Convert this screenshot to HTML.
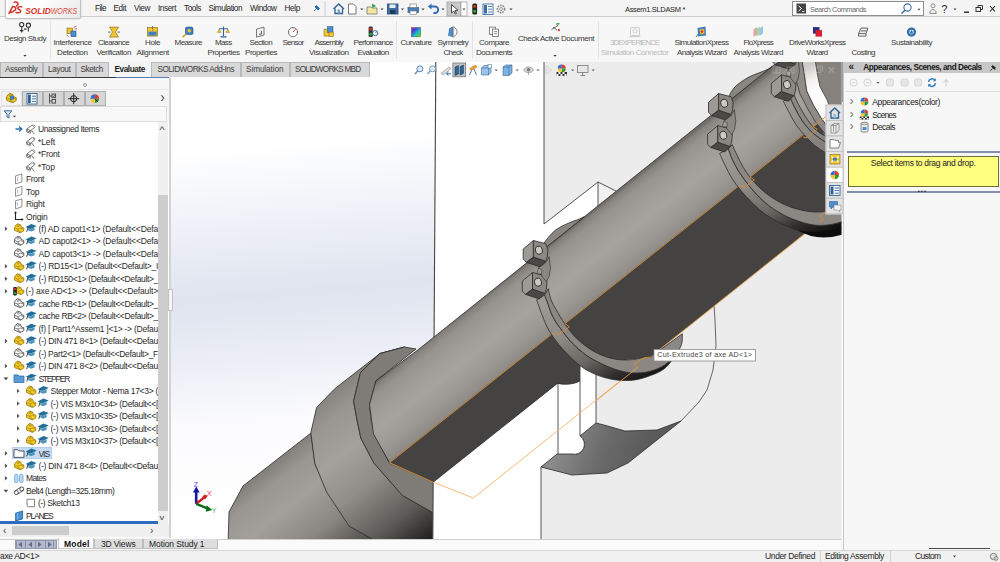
<!DOCTYPE html>
<html lang="en"><head><meta charset="utf-8"><title>SOLIDWORKS - Assem1.SLDASM</title>
<style>
html,body{margin:0;padding:0}
body{width:1000px;height:562px;overflow:hidden;position:relative;background:#f2f2f2;font-family:"Liberation Sans",sans-serif}
.t{position:absolute;white-space:pre}
.a{position:absolute}
svg{position:absolute;left:0;top:0}
</style></head><body>
<svg width="1000" height="562" viewBox="0 0 1000 562">
<defs>
<clipPath id="vp"><rect x="170.7" y="62" width="670.8" height="477"/></clipPath>
<linearGradient id="bg" gradientUnits="userSpaceOnUse" x1="290" y1="62" x2="330" y2="539"><stop offset="0" stop-color="#fff"/><stop offset="0.17" stop-color="#fff"/><stop offset="0.36" stop-color="#ebeef6"/><stop offset="0.48" stop-color="#e0e4ef"/><stop offset="0.6" stop-color="#eaedf5"/><stop offset="0.75" stop-color="#fcfcfe"/><stop offset="1" stop-color="#fff"/></linearGradient>
<linearGradient id="sh" gradientUnits="userSpaceOnUse" x1="500.0" y1="284.2" x2="543.9" y2="340.0"><stop offset="0" stop-color="#6f6c67"/><stop offset="0.04" stop-color="#85827d"/><stop offset="0.14" stop-color="#96938e"/><stop offset="0.35" stop-color="#a19e99"/><stop offset="0.55" stop-color="#a6a39e"/><stop offset="0.8" stop-color="#9c9994"/><stop offset="1" stop-color="#8e8b86"/></linearGradient>
<linearGradient id="fl" gradientUnits="userSpaceOnUse" x1="350.0" y1="377.0" x2="467.4" y2="526.3"><stop offset="0" stop-color="#86837e"/><stop offset="0.12" stop-color="#9a9792"/><stop offset="0.3" stop-color="#a4a19c"/><stop offset="0.5" stop-color="#918e89"/><stop offset="0.75" stop-color="#5c5a57"/><stop offset="0.95" stop-color="#1a1a19"/><stop offset="1" stop-color="#0c0c0c"/></linearGradient>
<linearGradient id="sc" gradientUnits="userSpaceOnUse" x1="280.0" y1="457.0" x2="372.7" y2="574.9"><stop offset="0" stop-color="#827f7a"/><stop offset="0.12" stop-color="#9a9792"/><stop offset="0.3" stop-color="#a3a09b"/><stop offset="0.55" stop-color="#8a8782"/><stop offset="0.8" stop-color="#504e4b"/><stop offset="1" stop-color="#1c1c1b"/></linearGradient>
<linearGradient id="rg" gradientUnits="objectBoundingBox" x1="0" y1="0" x2="0.9" y2="1"><stop offset="0" stop-color="#a29f9a"/><stop offset="0.35" stop-color="#8f8c87"/><stop offset="0.6" stop-color="#6a6864"/><stop offset="0.8" stop-color="#2e2d2b"/><stop offset="1" stop-color="#0a0a0a"/></linearGradient>
<linearGradient id="rgC" gradientUnits="objectBoundingBox" x1="0" y1="0" x2="0.9" y2="1"><stop offset="0" stop-color="#a09d98"/><stop offset="1" stop-color="#7d7a75"/></linearGradient>
<linearGradient id="pk" gradientUnits="userSpaceOnUse" x1="560" y1="440" x2="640" y2="470"><stop offset="0" stop-color="#8b8b8b"/><stop offset="0.5" stop-color="#6b6b6b"/><stop offset="1" stop-color="#5a5a5a"/></linearGradient>
<linearGradient id="wb" gradientUnits="userSpaceOnUse" x1="803" y1="70" x2="822" y2="100"><stop offset="0" stop-color="#cfcdc9"/><stop offset="0.35" stop-color="#f1f0ee"/><stop offset="0.7" stop-color="#ffffff"/><stop offset="1" stop-color="#fbfbfa"/></linearGradient>
</defs>
<g clip-path="url(#vp)">
<rect x="170" y="62" width="673" height="477" fill="url(#bg)"/>
<polygon points="311.0,433.0 243.0,486.0 229.0,512.0 228.0,545.0 380.0,545.0 330.0,495.0 315.0,464.0" fill="url(#sc)" stroke="#2b2b2b" stroke-width="0.8" stroke-linejoin="round"/>
<polygon points="404.5,347.0 380.0,353.5 334.8,388.7 316.6,407.4 310.8,432.8 314.8,463.5 326.6,492.0 349.0,526.0 372.0,539.0 380.0,545.0 450.0,545.0 450.0,520.0 432.3,512.3 402.4,495.4 373.8,463.0 360.8,438.0 357.0,420.0 353.6,401.0 360.5,372.5 380.0,353.5 404.5,347.0" fill="url(#fl)" stroke="#2b2b2b" stroke-width="0.8" stroke-linejoin="round"/>
<polygon points="416.0,349.0 404.5,347.0 380.0,353.5 360.5,372.5 353.6,401.0 357.0,420.0 360.8,438.0 373.8,463.0 402.4,495.4 432.3,512.3 450.0,520.0 450.0,489.0 389.4,463.0 375.0,435.6 371.2,420.0 369.5,404.7 376.0,380.7" fill="#7f7c77" stroke="#2b2b2b" stroke-width="0.8" stroke-linejoin="round"/>
<polygon points="435.8,62 843,62 843,539 432.8,539" fill="#fff"/>
<polygon points="544.0,62.0 843.0,62.0 843.0,539.0 541.0,539.0 541.0,467.0 557.0,454.0 572.0,454.0 580.0,436.0 596.0,423.0 596.0,300.0 616.0,191.0 598.0,182.0 544.0,224.0" fill="#ececec"/>
<polygon points="598,182 616.2,190.6 640,200 640,260 598,260" fill="#f1f1f1"/>
<path d="M435.8,62.0L432.8,539.0" fill="none" stroke="#444" stroke-width="1.1" stroke-linejoin="round" />
<path d="M544.0,62.0L544.0,224.0L598.0,182.0L616.0,191.0" fill="none" stroke="#2b2b2b" stroke-width="0.8" stroke-linejoin="round" />
<path d="M598.0,182.0L598.0,206.0" fill="none" stroke="#2b2b2b" stroke-width="0.8" stroke-linejoin="round" />
<path d="M558.0,383.0L558.0,454.0" fill="none" stroke="#2b2b2b" stroke-width="0.8" stroke-linejoin="round" />
<path d="M580.0,365.0L580.0,436.0" fill="none" stroke="#2b2b2b" stroke-width="0.8" stroke-linejoin="round" />
<path d="M596.0,372.0L596.0,423.0" fill="none" stroke="#2b2b2b" stroke-width="0.8" stroke-linejoin="round" />
<path d="M541.0,467.0L541.0,539.0" fill="none" stroke="#2b2b2b" stroke-width="0.8" stroke-linejoin="round" />
<path d="M681.0,421.0L699.0,402.0L707.0,390.0L713.0,370.0L716.0,346.0L715.0,320.0L714.0,305.0" fill="none" stroke="#2b2b2b" stroke-width="0.7" stroke-linejoin="round" />
<path d="M541,467 L557,454 L572,454 A10,10 0 0 0 580,436 L596,423 L604,425 L625,431 L657,430 L681,421 L628,463 L607,473 L572,475 Z" fill="url(#pk)" stroke="#2b2b2b" stroke-width="0.8" stroke-linejoin="round"/>
<path d="M572,454 A10,10 0 0 0 580,436 L578,440 Z" fill="#fff" stroke="none"/><path d="M572,454 A10,10 0 0 0 580,436" fill="#fff" stroke="#2b2b2b" stroke-width="0.8"/>
<polygon points="416.0,351.4 376.0,380.7 369.5,404.7 373.5,434.0 389.5,462.7 860.0,89.8 860.0,40.0 805.2,40.0 416.0,351.4" fill="url(#sh)" stroke="#2b2b2b" stroke-width="0.8" stroke-linejoin="round"/>
<path d="M389.5,462.7 L860,89.8 L860,189.6 L649.5,357.5 L580,365 L580,381 Q570,386 557.4,383.4 L433.2,482.2 Z" fill="#454341"/>
<path d="M580,381 Q570,386 557.4,383.4 L433.2,482.2" fill="none" stroke="#2b2b2b" stroke-width="0.8" stroke-linejoin="round" />
<path d="M433.2,482.2 L389.5,462.7" fill="none" stroke="#d98a32" stroke-width="0.95" stroke-linejoin="round" />
<path d="M433.2,482.2 L473.4,498 L649.5,357.5" fill="none" stroke="#f6b26b" stroke-width="0.9" stroke-linejoin="round" />
<path d="M389.5,462.7 L860,89.8" fill="none" stroke="#d98a32" stroke-width="0.95" stroke-linejoin="round" />
<path d="M655,353.1 L860,189.6" fill="none" stroke="#d98a32" stroke-width="0.95" stroke-linejoin="round" />
<polygon points="794.0,56.0 850.0,56.0 850.0,240.0 826.0,140.0 808.0,92.0" fill="#86837e"/>
<path d="M794.3,56.0L794.3,62.4L796.2,80.4L800.0,94.1L808.6,110.3L816.1,122.8L826.0,135.0L830.0,130.0L821.1,117.8L813.6,105.3L806.8,91.0L804.3,74.2L802.4,62.4L802.4,56.0Z" fill="#8f8c87" stroke="#2b2b2b" stroke-width="0.7"/>
<path d="M802.4,56.0L802.4,62.4L804.3,74.2L806.8,91.0L813.6,105.3L821.1,117.8L830.0,130.0L836.0,118.0L828.6,104.0L826.7,99.1L819.9,86.6L817.4,74.2L815.5,62.4L815.5,56.0Z" fill="url(#wb)" stroke="#2b2b2b" stroke-width="0.7"/>
<path d="M793.0,45.4C794.0,43.8 796.7,38.5 798.9,36.0C801.1,33.5 804.8,31.3 806.0,30.4L806.0,39.4L793.0,49.8Z" fill="#8a8782" stroke="none"/>
<path d="M793.0,45.4C794.0,43.8 796.7,38.5 798.9,36.0C801.1,33.5 804.8,31.3 806.0,30.4" fill="none" stroke="#2b2b2b" stroke-width="0.8" stroke-linejoin="round" />
<path d="M793.0,49.8L806.0,39.4" fill="none" stroke="#2b2b2b" stroke-width="0.8" stroke-linejoin="round" />
<path d="M783.4,101.3C784.4,103.3 787.4,109.3 789.6,113.4C791.8,117.5 794.1,122.0 796.8,125.8C799.5,129.7 802.7,133.2 805.7,136.5C808.7,139.8 811.4,142.7 814.6,145.4C817.9,148.1 821.6,150.4 825.2,152.5C828.8,154.6 834.2,157.1 836.0,158.0L836.0,148.0C834.3,147.0 828.7,143.8 826.0,142.2C823.3,140.6 822.4,140.1 819.9,138.3C817.4,136.5 814.0,134.2 811.0,131.2C808.0,128.2 804.8,124.4 802.1,120.5C799.4,116.6 797.1,112.0 795.0,108.0C792.9,104.0 790.5,98.4 789.6,96.5Z" fill="url(#rgC)" stroke="#2b2b2b" stroke-width="0.8" stroke-linejoin="round"/>
<path d="M789.6,96.5C790.5,98.4 792.9,104.0 795.0,108.0C797.1,112.0 799.4,116.6 802.1,120.5C804.8,124.4 808.0,128.2 811.0,131.2C814.0,134.2 817.4,136.5 819.9,138.3C822.4,140.1 823.3,140.6 826.0,142.2C828.7,143.8 834.3,147.0 836.0,148.0L836.0,142.0C834.3,141.1 828.7,138.0 826.0,136.5C823.3,135.0 822.1,134.6 819.9,133.0C817.7,131.4 815.2,129.4 812.8,126.7C810.4,124.0 808.1,120.7 805.7,117.0C803.3,113.3 800.6,108.5 798.5,104.5C796.4,100.5 794.1,94.8 793.2,92.9Z" fill="#8b8883" stroke="#2b2b2b" stroke-width="0.8" stroke-linejoin="round"/>
<path d="M803.0,137.0L807.3,137.8L817.2,129.2L812.8,126.7L830.0,113.5" fill="none" stroke="#d98a32" stroke-width="0.95" stroke-linejoin="round" />
<polygon points="782.4,42.9 772.2,51.5 772.2,61.6 775.4,64.8 782.4,59.5" fill="#9d9a95" stroke="#2b2b2b" stroke-width="0.8" stroke-linejoin="round"/>
<polygon points="775.4,64.8 782.4,59.5 794.7,63.7 789.3,69.3" fill="#4b4946" stroke="#2b2b2b" stroke-width="0.8" stroke-linejoin="round"/>
<polygon points="782.4,42.9 794.7,46.1 796.9,52.0 796.2,59.5 794.7,63.7 782.4,59.5" fill="#8b8883" stroke="#2b2b2b" stroke-width="0.8" stroke-linejoin="round"/>
<ellipse cx="787.9" cy="52.6" rx="3.4" ry="4" fill="#cbc9c5" stroke="#2b2b2b" stroke-width="0.9" transform="rotate(-15 787.9 52.6)"/>
<polygon points="781.5,74.9 771.3,83.5 771.3,93.6 774.5,96.8 781.5,91.5" fill="#9d9a95" stroke="#2b2b2b" stroke-width="0.8" stroke-linejoin="round"/>
<polygon points="774.5,96.8 781.5,91.5 793.8,95.7 788.4,101.3" fill="#4b4946" stroke="#2b2b2b" stroke-width="0.8" stroke-linejoin="round"/>
<polygon points="781.5,74.9 793.8,78.1 796.0,84.0 795.3,91.5 793.8,95.7 781.5,91.5" fill="#8b8883" stroke="#2b2b2b" stroke-width="0.8" stroke-linejoin="round"/>
<ellipse cx="787.0" cy="84.6" rx="3.4" ry="4" fill="#cbc9c5" stroke="#2b2b2b" stroke-width="0.9" transform="rotate(-15 787.0 84.6)"/>
<path d="M729.0,96.0C730.0,94.5 732.0,89.8 735.2,86.7C738.4,83.6 743.9,79.9 748.0,77.6C752.1,75.2 756.4,74.0 759.8,72.6C763.2,71.2 766.3,70.0 768.3,69.0C770.3,68.0 771.4,66.9 772.0,66.5L772.0,66.6L729.0,101.0Z" fill="#8a8782" stroke="none"/>
<path d="M729.0,96.0C730.0,94.5 732.0,89.8 735.2,86.7C738.4,83.6 743.9,79.9 748.0,77.6C752.1,75.2 756.4,74.0 759.8,72.6C763.2,71.2 766.3,70.0 768.3,69.0C770.3,68.0 771.4,66.9 772.0,66.5" fill="none" stroke="#2b2b2b" stroke-width="0.8" stroke-linejoin="round" />
<path d="M729.0,101.0L772.0,66.6" fill="none" stroke="#2b2b2b" stroke-width="0.8" stroke-linejoin="round" />
<path d="M719.6,153.5C720.6,155.6 723.4,161.9 725.5,166.2C727.6,170.4 729.7,174.9 732.3,179.0C734.9,183.1 737.7,186.6 741.1,190.7C744.5,194.8 748.6,199.3 752.9,203.4C757.1,207.5 761.7,211.8 766.6,215.2C771.5,218.6 777.0,221.5 782.2,224.0C787.4,226.5 792.7,228.7 797.9,230.3C803.1,231.9 808.7,233.0 813.6,233.4C818.5,233.8 822.7,233.7 827.3,232.8C831.9,231.9 837.2,229.7 841.0,227.9C844.8,226.1 848.5,223.0 850.0,222.0L850.0,218.0C848.5,218.7 844.8,220.8 841.0,222.0C837.2,223.2 831.9,224.5 827.3,225.0C822.7,225.5 818.5,225.7 813.6,225.0C808.7,224.3 803.1,222.8 797.9,221.0C792.7,219.2 787.1,216.8 782.2,214.2C777.3,211.6 772.7,208.7 768.5,205.4C764.3,202.1 760.4,198.3 756.8,194.6C753.2,190.8 749.9,186.7 747.0,182.9C744.1,179.2 741.7,176.0 739.2,172.1C736.8,168.2 734.1,163.3 732.3,159.4C730.5,155.5 729.0,150.4 728.4,148.6Z" fill="url(#rg)" stroke="#2b2b2b" stroke-width="0.8" stroke-linejoin="round"/>
<path d="M728.4,148.6C729.0,150.4 730.5,155.5 732.3,159.4C734.1,163.3 736.8,168.2 739.2,172.1C741.7,176.0 744.1,179.2 747.0,182.9C749.9,186.7 753.2,190.8 756.8,194.6C760.4,198.3 764.3,202.1 768.5,205.4C772.7,208.7 777.3,211.6 782.2,214.2C787.1,216.8 792.7,219.2 797.9,221.0C803.1,222.8 808.7,224.3 813.6,225.0C818.5,225.7 822.7,225.5 827.3,225.0C831.9,224.5 837.2,223.2 841.0,222.0C844.8,220.8 848.5,218.7 850.0,218.0L850.0,205.0L825.3,211.8C823.0,211.8 816.2,212.2 811.6,211.8C807.0,211.4 802.5,210.5 797.9,209.3C793.3,208.1 788.8,206.5 784.2,204.4C779.6,202.3 774.8,199.5 770.5,196.6C766.2,193.7 762.1,190.1 758.7,186.8C755.3,183.5 752.5,180.3 749.9,177.0C747.3,173.7 745.2,170.8 743.1,167.2C741.0,163.6 739.0,159.2 737.2,155.5C735.4,151.8 733.1,146.5 732.3,144.7Z" fill="#8b8883" stroke="#2b2b2b" stroke-width="0.8" stroke-linejoin="round"/>
<path d="M739.2,185.8L745.0,187.4L754.4,179.9L749.9,177.0" fill="none" stroke="#d98a32" stroke-width="0.95" stroke-linejoin="round" />
<path d="M819.4,222.0L823.8,219.7L819.4,216.2L825.3,211.8" fill="none" stroke="#d98a32" stroke-width="0.95" stroke-linejoin="round" />
<path d="M797.9,230.3 Q815,234 841,227.9 L850,222 L850,232 Q820,244 797.9,230.3Z" fill="#0c0c0c"/>
<polygon points="718.7,93.6 708.5,102.2 708.5,112.3 711.7,115.5 718.7,110.2" fill="#9d9a95" stroke="#2b2b2b" stroke-width="0.8" stroke-linejoin="round"/>
<polygon points="711.7,115.5 718.7,110.2 731.0,114.4 725.6,120.0" fill="#4b4946" stroke="#2b2b2b" stroke-width="0.8" stroke-linejoin="round"/>
<polygon points="718.7,93.6 731.0,96.8 733.2,102.7 732.5,110.2 731.0,114.4 718.7,110.2" fill="#8b8883" stroke="#2b2b2b" stroke-width="0.8" stroke-linejoin="round"/>
<ellipse cx="724.2" cy="103.3" rx="3.4" ry="4" fill="#cbc9c5" stroke="#2b2b2b" stroke-width="0.9" transform="rotate(-15 724.2 103.3)"/>
<polygon points="717.8,125.6 707.6,134.2 707.6,144.3 710.8,147.5 717.8,142.2" fill="#9d9a95" stroke="#2b2b2b" stroke-width="0.8" stroke-linejoin="round"/>
<polygon points="710.8,147.5 717.8,142.2 730.1,146.4 724.7,152.0" fill="#4b4946" stroke="#2b2b2b" stroke-width="0.8" stroke-linejoin="round"/>
<polygon points="717.8,125.6 730.1,128.8 732.3,134.7 731.6,142.2 730.1,146.4 717.8,142.2" fill="#8b8883" stroke="#2b2b2b" stroke-width="0.8" stroke-linejoin="round"/>
<ellipse cx="723.3" cy="135.3" rx="3.4" ry="4" fill="#cbc9c5" stroke="#2b2b2b" stroke-width="0.9" transform="rotate(-15 723.3 135.3)"/>
<path d="M544.0,243.0C544.7,242.1 546.2,239.8 548.3,237.5C550.3,235.2 552.8,232.0 556.3,229.5C559.8,227.0 565.6,224.4 569.5,222.7C573.4,220.9 577.0,220.0 579.4,219.0C581.8,218.0 583.2,217.2 584.0,216.8L584.0,217.0L544.0,249.0Z" fill="#8a8782" stroke="none"/>
<path d="M544.0,243.0C544.7,242.1 546.2,239.8 548.3,237.5C550.3,235.2 552.8,232.0 556.3,229.5C559.8,227.0 565.6,224.4 569.5,222.7C573.4,220.9 577.0,220.0 579.4,219.0C581.8,218.0 583.2,217.2 584.0,216.8" fill="none" stroke="#2b2b2b" stroke-width="0.8" stroke-linejoin="round" />
<path d="M544.0,249.0L584.0,217.0" fill="none" stroke="#2b2b2b" stroke-width="0.8" stroke-linejoin="round" />
<path d="M536.7,299.8C537.3,301.5 538.5,305.5 540.2,310.0C541.9,314.5 544.4,321.5 547.0,326.7C549.6,331.9 552.4,336.2 556.0,341.0C559.6,345.8 564.0,350.8 568.5,355.2C573.0,359.6 577.7,364.2 582.7,367.6C587.7,371.0 593.1,373.5 598.7,375.6C604.3,377.7 610.6,379.3 616.5,380.0C622.4,380.7 628.7,380.7 634.3,380.0C639.9,379.3 645.2,377.5 650.3,375.6C655.3,373.7 660.3,371.9 664.6,368.5C668.9,365.1 674.1,357.2 676.0,355.0L675.2,355.2C673.4,356.8 668.8,362.3 664.6,365.0C660.5,367.7 655.3,369.9 650.3,371.2C645.2,372.5 639.6,373.1 634.3,373.0C629.0,372.9 623.6,371.8 618.3,370.3C613.0,368.8 607.6,366.5 602.3,364.0C597.0,361.5 591.3,358.8 586.3,355.2C581.2,351.6 576.3,347.1 572.0,342.7C567.7,338.2 563.8,332.9 560.5,328.5C557.2,324.1 554.5,320.0 552.5,316.0C550.5,312.0 549.6,308.2 548.3,304.7C547.0,301.2 545.3,296.6 544.7,295.0Z" fill="url(#rg)" stroke="#2b2b2b" stroke-width="0.8" stroke-linejoin="round"/>
<path d="M544.7,295.0C545.3,296.6 547.0,301.2 548.3,304.7C549.6,308.2 550.5,312.0 552.5,316.0C554.5,320.0 557.2,324.1 560.5,328.5C563.8,332.9 567.7,338.2 572.0,342.7C576.3,347.1 581.2,351.6 586.3,355.2C591.3,358.8 597.0,361.5 602.3,364.0C607.6,366.5 613.0,368.8 618.3,370.3C623.6,371.8 629.0,372.9 634.3,373.0C639.6,373.1 645.2,372.5 650.3,371.2C655.3,369.9 660.5,367.7 664.6,365.0C668.8,362.3 672.4,358.6 675.2,355.2C678.0,351.8 680.3,348.1 681.5,344.5C682.7,340.9 682.2,335.6 682.3,333.8L650.3,356.9L643.2,357.3C641.4,357.7 636.6,359.2 632.5,359.6C628.4,360.0 623.0,360.2 618.3,359.6C613.5,359.0 608.8,357.8 604.0,356.0C599.2,354.2 594.5,352.0 589.8,348.9C585.1,345.8 579.8,341.5 575.6,337.4C571.5,333.2 568.1,328.6 564.9,324.0C561.7,319.4 558.6,314.1 556.3,310.0C554.0,305.9 552.2,302.9 550.9,299.4C549.6,295.8 548.7,290.5 548.3,288.7Z" fill="#8b8883" stroke="#2b2b2b" stroke-width="0.8" stroke-linejoin="round"/>
<path d="M553.3,332.9L559.6,334.2L569.4,326.7L564.9,323.7" fill="none" stroke="#d98a32" stroke-width="0.95" stroke-linejoin="round" />
<path d="M650.3,357.0L644.0,357.8L634.3,364.0L637.9,367.3" fill="none" stroke="#d98a32" stroke-width="0.95" stroke-linejoin="round" />
<path d="M637.9,367.3L597.0,400.0" fill="none" stroke="#f0a050" stroke-width="0.9" stroke-linejoin="round" />
<polygon points="533.4,240.5 523.2,249.1 523.2,259.2 526.4,262.4 533.4,257.1" fill="#9d9a95" stroke="#2b2b2b" stroke-width="0.8" stroke-linejoin="round"/>
<polygon points="526.4,262.4 533.4,257.1 545.7,261.3 540.3,266.9" fill="#4b4946" stroke="#2b2b2b" stroke-width="0.8" stroke-linejoin="round"/>
<polygon points="533.4,240.5 545.7,243.7 547.9,249.6 547.2,257.1 545.7,261.3 533.4,257.1" fill="#8b8883" stroke="#2b2b2b" stroke-width="0.8" stroke-linejoin="round"/>
<ellipse cx="538.9" cy="250.2" rx="3.4" ry="4" fill="#cbc9c5" stroke="#2b2b2b" stroke-width="0.9" transform="rotate(-15 538.9 250.2)"/>
<polygon points="532.5,272.5 522.3,281.1 522.3,291.2 525.5,294.4 532.5,289.1" fill="#9d9a95" stroke="#2b2b2b" stroke-width="0.8" stroke-linejoin="round"/>
<polygon points="525.5,294.4 532.5,289.1 544.8,293.3 539.4,298.9" fill="#4b4946" stroke="#2b2b2b" stroke-width="0.8" stroke-linejoin="round"/>
<polygon points="532.5,272.5 544.8,275.7 547.0,281.6 546.3,289.1 544.8,293.3 532.5,289.1" fill="#8b8883" stroke="#2b2b2b" stroke-width="0.8" stroke-linejoin="round"/>
<ellipse cx="538.0" cy="282.2" rx="3.4" ry="4" fill="#cbc9c5" stroke="#2b2b2b" stroke-width="0.9" transform="rotate(-15 538.0 282.2)"/>
<polygon points="545.6,262.9 549.1,256.7 550.5,268.0 549.3,276.0 546.5,281.6 542.0,276.3 538.5,267.9" fill="#8b8883" stroke="#2b2b2b" stroke-width="0.6" stroke-linejoin="round"/>
<polygon points="538.5,267.9 542.0,270.0 541.5,274.0 537.0,273.5" fill="#a09d98" stroke="#2b2b2b" stroke-width="0.5"/>
<polygon points="730.9,116.0 734.4,109.8 735.8,121.1 734.6,129.1 731.8,134.7 727.3,129.4 723.8,121.0" fill="#8b8883" stroke="#2b2b2b" stroke-width="0.6" stroke-linejoin="round"/>
<polygon points="723.8,121.0 727.3,123.1 726.8,127.1 722.3,126.6" fill="#a09d98" stroke="#2b2b2b" stroke-width="0.5"/>
<polygon points="794.6,65.3 798.1,59.1 799.5,70.4 798.3,78.4 795.5,84.0 791.0,78.7 787.5,70.3" fill="#8b8883" stroke="#2b2b2b" stroke-width="0.6" stroke-linejoin="round"/>
<polygon points="787.5,70.3 791.0,72.4 790.5,76.4 786.0,75.9" fill="#a09d98" stroke="#2b2b2b" stroke-width="0.5"/>
</g>
<g fill="none">
<path d="M196.2,503.8 L196.2,492" stroke="#1414a8" stroke-width="2.6"/><path d="M192.9,492.6 L196.3,486.6 L199.7,492.6Z" fill="#1414a8"/>
<path d="M196.2,503.8 L204,497.6" stroke="#c81e1e" stroke-width="2.4"/><path d="M202,497.6 L204.4,494.4 L207.7,495.8 L205.4,499.2Z" fill="#d42222"/>
<path d="M196.2,503.8 L208,508.6" stroke="#0c6a1c" stroke-width="2.4"/><path d="M206.6,505.3 L212.2,510 L205.8,511.7Z" fill="#0c6a1c"/>
</g>
<text x="193.6" y="487" font-family="Liberation Sans, sans-serif" font-size="7.6" fill="#5a5aff">Z</text>
<text x="206.8" y="496" font-family="Liberation Sans, sans-serif" font-size="7.6" fill="#f0505e">X</text>
<text x="211.6" y="513" font-family="Liberation Sans, sans-serif" font-size="7.6" fill="#62b276">Y</text>
</svg>
<div class="a" style="left:0;top:0;width:1000px;height:16px;background:#f4f4f4"></div>
<div class="a" style="left:0;top:16px;width:1000px;height:46px;background:#f7f7f7;border-top:1px solid #cdcdcd;box-sizing:border-box"></div>
<div class="a" style="left:5px;top:-1px;width:76px;height:20px;background:linear-gradient(135deg,#fdfdfd 40%,#e9e9e9 100%);border:1px solid #c2c2c2;border-radius:0 0 2px 2px;box-sizing:border-box;box-shadow:0 0 1.5px #bbb"></div>
<span class="t" style="top:4.08px;font-size:8.2px;line-height:9.84px;color:#1e1e1e;letter-spacing:-0.551px;left:95.00px;">File</span>
<span class="t" style="top:4.08px;font-size:8.2px;line-height:9.84px;color:#1e1e1e;letter-spacing:-0.402px;left:113.50px;">Edit</span>
<span class="t" style="top:4.08px;font-size:8.2px;line-height:9.84px;color:#1e1e1e;letter-spacing:-0.402px;left:134.00px;">View</span>
<span class="t" style="top:4.08px;font-size:8.2px;line-height:9.84px;color:#1e1e1e;letter-spacing:-0.414px;left:158.00px;">Insert</span>
<span class="t" style="top:4.08px;font-size:8.2px;line-height:9.84px;color:#1e1e1e;letter-spacing:-0.425px;left:184.00px;">Tools</span>
<span class="t" style="top:4.08px;font-size:8.2px;line-height:9.84px;color:#1e1e1e;letter-spacing:-0.473px;left:208.50px;">Simulation</span>
<span class="t" style="top:4.08px;font-size:8.2px;line-height:9.84px;color:#1e1e1e;letter-spacing:-0.438px;left:250.00px;">Window</span>
<span class="t" style="top:4.08px;font-size:8.2px;line-height:9.84px;color:#1e1e1e;letter-spacing:-0.336px;left:284.50px;">Help</span>
<span class="t" style="top:4.50px;font-size:7.5px;line-height:9.00px;color:#1e1e1e;letter-spacing:-0.335px;left:625.00px;">Assem1.SLDASM *</span>
<div class="a" style="left:792px;top:1px;width:132px;height:15px;background:#fff;border:1px solid #8e8e8e;box-sizing:border-box"></div>
<span class="t" style="top:4.50px;font-size:7.5px;line-height:9.00px;color:#6a6a6a;letter-spacing:-0.547px;left:810.00px;">Search Commands</span>
<span class="t" style="top:37.60px;font-size:8px;line-height:9.60px;color:#383838;letter-spacing:-0.392px;left:53.50px;">Interference</span>
<span class="t" style="top:47.80px;font-size:8px;line-height:9.60px;color:#383838;letter-spacing:-0.366px;left:57.00px;">Detection</span>
<span class="t" style="top:37.60px;font-size:8px;line-height:9.60px;color:#383838;letter-spacing:-0.608px;left:98.00px;">Clearance</span>
<span class="t" style="top:47.80px;font-size:8px;line-height:9.60px;color:#383838;letter-spacing:-0.387px;left:96.50px;">Verification</span>
<span class="t" style="top:37.60px;font-size:8px;line-height:9.60px;color:#383838;letter-spacing:-0.363px;left:145.00px;">Hole</span>
<span class="t" style="top:47.80px;font-size:8px;line-height:9.60px;color:#383838;letter-spacing:-0.342px;left:136.50px;">Alignment</span>
<span class="t" style="top:37.60px;font-size:8px;line-height:9.60px;color:#383838;letter-spacing:-0.518px;left:174.50px;">Measure</span>
<span class="t" style="top:37.60px;font-size:8px;line-height:9.60px;color:#383838;letter-spacing:-0.656px;left:215.00px;">Mass</span>
<span class="t" style="top:47.80px;font-size:8px;line-height:9.60px;color:#383838;letter-spacing:-0.447px;left:207.50px;">Properties</span>
<span class="t" style="top:37.60px;font-size:8px;line-height:9.60px;color:#383838;letter-spacing:-0.598px;left:249.50px;">Section</span>
<span class="t" style="top:47.80px;font-size:8px;line-height:9.60px;color:#383838;letter-spacing:-0.447px;left:245.00px;">Properties</span>
<span class="t" style="top:37.60px;font-size:8px;line-height:9.60px;color:#383838;letter-spacing:-0.727px;left:282.50px;">Sensor</span>
<span class="t" style="top:37.60px;font-size:8px;line-height:9.60px;color:#383838;letter-spacing:-0.773px;left:314.50px;">Assembly</span>
<span class="t" style="top:47.80px;font-size:8px;line-height:9.60px;color:#383838;letter-spacing:-0.406px;left:309.00px;">Visualization</span>
<span class="t" style="top:37.60px;font-size:8px;line-height:9.60px;color:#383838;letter-spacing:-0.618px;left:353.50px;">Performance</span>
<span class="t" style="top:47.80px;font-size:8px;line-height:9.60px;color:#383838;letter-spacing:-0.636px;left:357.50px;">Evaluation</span>
<span class="t" style="top:37.60px;font-size:8px;line-height:9.60px;color:#383838;letter-spacing:-0.458px;left:400.50px;">Curvature</span>
<span class="t" style="top:37.60px;font-size:8px;line-height:9.60px;color:#383838;letter-spacing:-0.688px;left:437.50px;">Symmetry</span>
<span class="t" style="top:47.80px;font-size:8px;line-height:9.60px;color:#383838;letter-spacing:-0.738px;left:443.50px;">Check</span>
<span class="t" style="top:37.60px;font-size:8px;line-height:9.60px;color:#383838;letter-spacing:-0.415px;left:479.00px;">Compare</span>
<span class="t" style="top:47.80px;font-size:8px;line-height:9.60px;color:#383838;letter-spacing:-0.497px;left:476.00px;">Documents</span>
<span class="t" style="top:37.60px;font-size:8px;line-height:9.60px;color:#383838;letter-spacing:-0.516px;left:674.50px;">SimulationXpress</span>
<span class="t" style="top:47.80px;font-size:8px;line-height:9.60px;color:#383838;letter-spacing:-0.494px;left:677.00px;">Analysis Wizard</span>
<span class="t" style="top:37.60px;font-size:8px;line-height:9.60px;color:#383838;letter-spacing:-0.724px;left:743.50px;">FloXpress</span>
<span class="t" style="top:47.80px;font-size:8px;line-height:9.60px;color:#383838;letter-spacing:-0.494px;left:733.50px;">Analysis Wizard</span>
<span class="t" style="top:37.60px;font-size:8px;line-height:9.60px;color:#383838;letter-spacing:-0.600px;left:789.00px;">DriveWorksXpress</span>
<span class="t" style="top:47.80px;font-size:8px;line-height:9.60px;color:#383838;letter-spacing:-0.648px;left:806.50px;">Wizard</span>
<span class="t" style="top:47.80px;font-size:8px;line-height:9.60px;color:#383838;letter-spacing:-0.518px;left:851.50px;">Costing</span>
<span class="t" style="top:37.60px;font-size:8px;line-height:9.60px;color:#383838;letter-spacing:-0.439px;left:891.00px;">Sustainability</span>
<span class="t" style="top:37.70px;font-size:8px;line-height:9.60px;color:#b9b9b9;letter-spacing:-1.066px;left:610.00px;">3DEXPERIENCE</span>
<span class="t" style="top:47.80px;font-size:8px;line-height:9.60px;color:#b9b9b9;letter-spacing:-0.449px;left:601.00px;">Simulation Connector</span>
<span class="t" style="top:33.70px;font-size:8px;line-height:9.60px;color:#383838;letter-spacing:-0.466px;left:4.00px;">Design Study</span>
<span class="t" style="top:33.70px;font-size:8px;line-height:9.60px;color:#383838;letter-spacing:-0.426px;left:518.00px;">Check Active Document</span>
<div class="a" style="left:49.5px;top:21px;width:1px;height:38px;background:#e3e3e3"></div>
<div class="a" style="left:396px;top:21px;width:1px;height:38px;background:#e3e3e3"></div>
<div class="a" style="left:472px;top:21px;width:1px;height:38px;background:#e3e3e3"></div>
<div class="a" style="left:598px;top:21px;width:1px;height:38px;background:#e3e3e3"></div>
<div class="a" style="left:0;top:62px;width:370px;height:15px;background:#d8d8d8"></div>
<div class="a" style="left:0px;top:62px;width:43px;height:15px;background:#d9d9d9;border:1px solid #b9b9b9;border-bottom:none;box-sizing:border-box"></div>
<span class="t" style="top:65.18px;font-size:8.2px;line-height:9.84px;color:#3a3a3a;letter-spacing:-0.375px;left:5.00px;">Assembly</span>
<div class="a" style="left:43px;top:62px;width:33px;height:15px;background:#d9d9d9;border:1px solid #b9b9b9;border-bottom:none;box-sizing:border-box"></div>
<span class="t" style="top:65.18px;font-size:8.2px;line-height:9.84px;color:#3a3a3a;letter-spacing:-0.349px;left:48.00px;">Layout</span>
<div class="a" style="left:76px;top:62px;width:33px;height:15px;background:#d9d9d9;border:1px solid #b9b9b9;border-bottom:none;box-sizing:border-box"></div>
<span class="t" style="top:65.18px;font-size:8.2px;line-height:9.84px;color:#3a3a3a;letter-spacing:-0.422px;left:80.50px;">Sketch</span>
<div class="a" style="left:109px;top:62px;width:42px;height:15px;background:#f5f5f5;border:1px solid #f5f5f5;border-bottom:none;box-sizing:border-box"></div>
<span class="t" style="top:65.18px;font-size:8.2px;line-height:9.84px;color:#222;font-weight:700;letter-spacing:-0.398px;left:114.50px;">Evaluate</span>
<div class="a" style="left:151px;top:62px;width:90px;height:15px;background:#d9d9d9;border:1px solid #b9b9b9;border-bottom:none;box-sizing:border-box"></div>
<span class="t" style="top:65.18px;font-size:8.2px;line-height:9.84px;color:#3a3a3a;letter-spacing:-0.503px;left:157.50px;">SOLIDWORKS Add-Ins</span>
<div class="a" style="left:241px;top:62px;width:49px;height:15px;background:#d9d9d9;border:1px solid #b9b9b9;border-bottom:none;box-sizing:border-box"></div>
<span class="t" style="top:65.18px;font-size:8.2px;line-height:9.84px;color:#3a3a3a;letter-spacing:-0.073px;left:246.00px;">Simulation</span>
<div class="a" style="left:290px;top:62px;width:80px;height:15px;background:#d9d9d9;border:1px solid #b9b9b9;border-bottom:none;box-sizing:border-box"></div>
<span class="t" style="top:65.18px;font-size:8.2px;line-height:9.84px;color:#3a3a3a;letter-spacing:-0.749px;left:295.00px;">SOLIDWORKS MBD</span>
<div class="a" style="left:0;top:76.6px;width:116px;height:1.5px;background:#3a3a3a"></div>
<div class="a" style="left:116px;top:76.6px;width:52.5px;height:1.6px;background:#5b7db4"></div>
<div class="a" style="left:0;top:78px;width:168.5px;height:460px;background:#fff"></div>
<div class="a" style="left:0;top:90px;width:168.5px;height:32px;background:#f6f6f6"></div>
<div class="a" style="left:0;top:78px;width:169px;height:12px;background:#f7f7f7;border-bottom:1px solid #e6e6e6;box-sizing:border-box"></div>
<div class="a" style="left:82.5px;top:82.5px;width:2px;height:2px;border:0.6px solid #9a9a9a;border-radius:50%"></div>
<div class="a" style="left:1px;top:91px;width:21px;height:15px;background:#f4f4f4;border:1px solid #e0e0e0;box-sizing:border-box"></div>
<div class="a" style="left:22px;top:91px;width:21px;height:15px;background:#d6d6d6;border:1px solid #b0b0b0;box-sizing:border-box"></div>
<div class="a" style="left:43px;top:91px;width:21px;height:15px;background:#d6d6d6;border:1px solid #b0b0b0;box-sizing:border-box"></div>
<div class="a" style="left:64px;top:91px;width:21px;height:15px;background:#d6d6d6;border:1px solid #b0b0b0;box-sizing:border-box"></div>
<div class="a" style="left:85px;top:91px;width:21px;height:15px;background:#d6d6d6;border:1px solid #b0b0b0;box-sizing:border-box"></div>
<span class="t" style="top:89.20px;font-size:14px;line-height:16.80px;color:#4a4a4a;left:160.30px;">›</span>
<div class="a" style="left:0px;top:106px;width:166.5px;height:16px;background:#f8f8f8;border:1px solid #dcdcdc;box-sizing:border-box"></div>
<div class="a" style="left:158px;top:122px;width:10px;height:402px;background:#f0f0f0"></div>
<div class="a" style="left:158px;top:195px;width:10px;height:316px;background:#cdcdcd"></div>
<span class="t" style="top:124.60px;font-size:9px;line-height:10.80px;color:#444;left:160.20px;transform:scaleX(1.2);">^</span>
<span class="t" style="top:513.20px;font-size:8px;line-height:9.60px;color:#444;left:160.20px;transform:scaleX(1.2);">v</span>
<div class="a" style="left:168.5px;top:78px;width:2.2px;height:460px;background:#d3d3d3"></div>
<div class="a" style="left:168px;top:289px;width:4.5px;height:22px;background:#f4f4f4;border:1px solid #c4c4c4;box-sizing:border-box"></div>
<div class="a" style="left:12px;top:447.1px;width:40px;height:12.4px;background:#c6dcf4;border:1px solid #b3cfee;box-sizing:border-box"></div>
<div class="a" style="left:38px;top:123.00px;width:120px;height:12px;overflow:hidden"><span class="t" style="top:1.20px;font-size:8.5px;line-height:10.20px;color:#2a2a2a;letter-spacing:-0.440px;left:0.00px;">Unassigned Items</span>
</div>
<div class="a" style="left:38px;top:135.47px;width:120px;height:12px;overflow:hidden"><span class="t" style="top:1.20px;font-size:8.5px;line-height:10.20px;color:#2a2a2a;letter-spacing:-0.100px;left:0.00px;">*Left</span>
</div>
<div class="a" style="left:38px;top:147.95px;width:120px;height:12px;overflow:hidden"><span class="t" style="top:1.20px;font-size:8.5px;line-height:10.20px;color:#2a2a2a;letter-spacing:-0.276px;left:0.00px;">*Front</span>
</div>
<div class="a" style="left:38px;top:160.43px;width:120px;height:12px;overflow:hidden"><span class="t" style="top:1.20px;font-size:8.5px;line-height:10.20px;color:#2a2a2a;letter-spacing:-0.004px;left:0.00px;">*Top</span>
</div>
<div class="a" style="left:26px;top:172.90px;width:132px;height:12px;overflow:hidden"><span class="t" style="top:1.20px;font-size:8.5px;line-height:10.20px;color:#2a2a2a;letter-spacing:-0.369px;left:0.00px;">Front</span>
</div>
<div class="a" style="left:26px;top:185.38px;width:132px;height:12px;overflow:hidden"><span class="t" style="top:1.20px;font-size:8.5px;line-height:10.20px;color:#2a2a2a;letter-spacing:-0.073px;left:0.00px;">Top</span>
</div>
<div class="a" style="left:26px;top:197.85px;width:132px;height:12px;overflow:hidden"><span class="t" style="top:1.20px;font-size:8.5px;line-height:10.20px;color:#2a2a2a;letter-spacing:-0.269px;left:0.00px;">Right</span>
</div>
<div class="a" style="left:26px;top:210.32px;width:132px;height:12px;overflow:hidden"><span class="t" style="top:1.20px;font-size:8.5px;line-height:10.20px;color:#2a2a2a;letter-spacing:-0.198px;left:0.00px;">Origin</span>
</div>
<div class="a" style="left:38.5px;top:222.80px;width:119.5px;height:12px;overflow:hidden"><span class="t" style="top:1.20px;font-size:8.5px;line-height:10.20px;color:#2a2a2a;letter-spacing:-0.154px;left:0.00px;">(f) AD capot1&lt;1&gt; (Default&lt;&lt;Defa</span>
</div>
<div class="a" style="left:38.5px;top:235.27px;width:119.5px;height:12px;overflow:hidden"><span class="t" style="top:1.20px;font-size:8.5px;line-height:10.20px;color:#2a2a2a;letter-spacing:-0.167px;left:0.00px;">AD capot2&lt;1&gt; -&gt; (Default&lt;&lt;Defa</span>
</div>
<div class="a" style="left:38.5px;top:247.75px;width:119.5px;height:12px;overflow:hidden"><span class="t" style="top:1.20px;font-size:8.5px;line-height:10.20px;color:#2a2a2a;letter-spacing:-0.167px;left:0.00px;">AD capot3&lt;1&gt; -&gt; (Default&lt;&lt;Defa</span>
</div>
<div class="a" style="left:38.5px;top:260.23px;width:119.5px;height:12px;overflow:hidden"><span class="t" style="top:1.20px;font-size:8.5px;line-height:10.20px;color:#2a2a2a;letter-spacing:-0.274px;left:0.00px;">(-) RD15&lt;1&gt; (Default&lt;&lt;Default&gt;_I</span>
</div>
<div class="a" style="left:38.5px;top:272.70px;width:119.5px;height:12px;overflow:hidden"><span class="t" style="top:1.20px;font-size:8.5px;line-height:10.20px;color:#2a2a2a;letter-spacing:-0.349px;left:0.00px;">(-) RD150&lt;1&gt; (Default&lt;&lt;Default&gt;_</span>
</div>
<div class="a" style="left:25.6px;top:285.17px;width:132.4px;height:12px;overflow:hidden"><span class="t" style="top:1.20px;font-size:8.5px;line-height:10.20px;color:#2a2a2a;letter-spacing:-0.132px;left:0.00px;">(-) axe AD&lt;1&gt; -&gt; (Default&lt;&lt;Default&gt;</span>
</div>
<div class="a" style="left:38.5px;top:297.65px;width:119.5px;height:12px;overflow:hidden"><span class="t" style="top:1.20px;font-size:8.5px;line-height:10.20px;color:#2a2a2a;letter-spacing:-0.345px;left:0.00px;">cache RB&lt;1&gt; (Default&lt;&lt;Default&gt;_</span>
</div>
<div class="a" style="left:38.5px;top:310.12px;width:119.5px;height:12px;overflow:hidden"><span class="t" style="top:1.20px;font-size:8.5px;line-height:10.20px;color:#2a2a2a;letter-spacing:-0.345px;left:0.00px;">cache RB&lt;2&gt; (Default&lt;&lt;Default&gt;_</span>
</div>
<div class="a" style="left:38.5px;top:322.60px;width:119.5px;height:12px;overflow:hidden"><span class="t" style="top:1.20px;font-size:8.5px;line-height:10.20px;color:#2a2a2a;letter-spacing:-0.243px;left:0.00px;">(f) [ Part1^Assem1 ]&lt;1&gt; -&gt; (Defau</span>
</div>
<div class="a" style="left:38.5px;top:335.07px;width:119.5px;height:12px;overflow:hidden"><span class="t" style="top:1.20px;font-size:8.5px;line-height:10.20px;color:#2a2a2a;letter-spacing:-0.282px;left:0.00px;">(-) DIN 471 8&lt;1&gt; (Default&lt;&lt;Defau</span>
</div>
<div class="a" style="left:38.5px;top:347.55px;width:119.5px;height:12px;overflow:hidden"><span class="t" style="top:1.20px;font-size:8.5px;line-height:10.20px;color:#2a2a2a;letter-spacing:-0.309px;left:0.00px;">(-) Part2&lt;1&gt; (Default&lt;&lt;Default&gt;_F</span>
</div>
<div class="a" style="left:38.5px;top:360.02px;width:119.5px;height:12px;overflow:hidden"><span class="t" style="top:1.20px;font-size:8.5px;line-height:10.20px;color:#2a2a2a;letter-spacing:-0.282px;left:0.00px;">(-) DIN 471 8&lt;2&gt; (Default&lt;&lt;Defau</span>
</div>
<div class="a" style="left:38.5px;top:372.50px;width:119.5px;height:12px;overflow:hidden"><span class="t" style="top:1.20px;font-size:8.5px;line-height:10.20px;color:#2a2a2a;letter-spacing:-1.312px;left:0.00px;">STEPPER</span>
</div>
<div class="a" style="left:50.6px;top:384.97px;width:107.4px;height:12px;overflow:hidden"><span class="t" style="top:1.20px;font-size:8.5px;line-height:10.20px;color:#2a2a2a;letter-spacing:-0.299px;left:0.00px;">Stepper Motor - Nema 17&lt;3&gt; (</span>
</div>
<div class="a" style="left:50.6px;top:397.45px;width:107.4px;height:12px;overflow:hidden"><span class="t" style="top:1.20px;font-size:8.5px;line-height:10.20px;color:#2a2a2a;letter-spacing:-0.305px;left:0.00px;">(-) VIS M3x10&lt;34&gt; (Default&lt;&lt;[</span>
</div>
<div class="a" style="left:50.6px;top:409.93px;width:107.4px;height:12px;overflow:hidden"><span class="t" style="top:1.20px;font-size:8.5px;line-height:10.20px;color:#2a2a2a;letter-spacing:-0.305px;left:0.00px;">(-) VIS M3x10&lt;35&gt; (Default&lt;&lt;[</span>
</div>
<div class="a" style="left:50.6px;top:422.40px;width:107.4px;height:12px;overflow:hidden"><span class="t" style="top:1.20px;font-size:8.5px;line-height:10.20px;color:#2a2a2a;letter-spacing:-0.305px;left:0.00px;">(-) VIS M3x10&lt;36&gt; (Default&lt;&lt;[</span>
</div>
<div class="a" style="left:50.6px;top:434.88px;width:107.4px;height:12px;overflow:hidden"><span class="t" style="top:1.20px;font-size:8.5px;line-height:10.20px;color:#2a2a2a;letter-spacing:-0.305px;left:0.00px;">(-) VIS M3x10&lt;37&gt; (Default&lt;&lt;[</span>
</div>
<div class="a" style="left:38.5px;top:447.35px;width:119.5px;height:12px;overflow:hidden"><span class="t" style="top:1.20px;font-size:8.5px;line-height:10.20px;color:#2a2a2a;letter-spacing:-1.068px;left:0.00px;">VIS</span>
</div>
<div class="a" style="left:38.5px;top:459.82px;width:119.5px;height:12px;overflow:hidden"><span class="t" style="top:1.20px;font-size:8.5px;line-height:10.20px;color:#2a2a2a;letter-spacing:-0.282px;left:0.00px;">(-) DIN 471 8&lt;4&gt; (Default&lt;&lt;Defau</span>
</div>
<div class="a" style="left:26px;top:472.30px;width:132px;height:12px;overflow:hidden"><span class="t" style="top:1.20px;font-size:8.5px;line-height:10.20px;color:#2a2a2a;letter-spacing:-0.631px;left:0.00px;">Mates</span>
</div>
<div class="a" style="left:26px;top:484.77px;width:132px;height:12px;overflow:hidden"><span class="t" style="top:1.20px;font-size:8.5px;line-height:10.20px;color:#2a2a2a;letter-spacing:-0.436px;left:0.00px;">Belt4 (Length=325.18mm)</span>
</div>
<div class="a" style="left:38px;top:497.25px;width:120px;height:12px;overflow:hidden"><span class="t" style="top:1.20px;font-size:8.5px;line-height:10.20px;color:#2a2a2a;letter-spacing:-0.400px;left:0.00px;">(-) Sketch13</span>
</div>
<div class="a" style="left:26px;top:509.72px;width:132px;height:12px;overflow:hidden"><span class="t" style="top:1.20px;font-size:8.5px;line-height:10.20px;color:#2a2a2a;letter-spacing:-1.174px;left:0.00px;">PLANES</span>
</div>

<div class="a" style="left:0;top:521.4px;width:158px;height:2.8px;background:#2f6cc0"></div>
<div class="a" style="left:0;top:524px;width:169px;height:13px;background:#f0f0f0"></div>
<div class="a" style="left:12px;top:526px;width:57px;height:9px;background:#cdcdcd"></div>
<span class="t" style="top:524.50px;font-size:10px;line-height:12.00px;color:#444;left:3.00px;">‹</span>
<span class="t" style="top:524.50px;font-size:10px;line-height:12.00px;color:#444;left:150.00px;">›</span>
<div class="a" style="left:0;top:538.6px;width:841.4px;height:11.4px;background:#fafafa;border-top:1px solid #cfcfcf;box-sizing:border-box"></div>
<div class="a" style="left:15px;top:540px;width:42px;height:9px;background:#b4b9cd;border:1px solid #8f96b0;box-sizing:border-box"></div>
<div class="a" style="left:58px;top:538px;width:36px;height:11px;background:#fbfbfb;border:1px solid #c8c8c8;border-top:none;box-sizing:border-box"></div>
<div class="a" style="left:94px;top:539px;width:49px;height:10px;background:#dedede;border:1px solid #bdbdbd;border-top:none;box-sizing:border-box"></div>
<div class="a" style="left:143px;top:539px;width:75px;height:10px;background:#dedede;border:1px solid #bdbdbd;border-top:none;box-sizing:border-box"></div>
<span class="t" style="top:539.10px;font-size:8.5px;line-height:10.20px;color:#111;font-weight:700;letter-spacing:0.188px;left:64.00px;">Model</span>
<span class="t" style="top:539.10px;font-size:8.5px;line-height:10.20px;color:#222;letter-spacing:-0.156px;left:101.00px;">3D Views</span>
<span class="t" style="top:539.10px;font-size:8.5px;line-height:10.20px;color:#222;letter-spacing:-0.086px;left:149.00px;">Motion Study 1</span>
<div class="a" style="left:0;top:550px;width:1000px;height:12px;background:#f1f1f1;border-top:1px solid #d5d5d5;box-sizing:border-box"></div>
<span class="t" style="top:551.40px;font-size:8.5px;line-height:10.20px;color:#222;letter-spacing:-0.340px;left:0.00px;">axe AD&lt;1&gt;</span>
<span class="t" style="top:551.40px;font-size:8.5px;line-height:10.20px;color:#222;letter-spacing:-0.370px;left:765.00px;">Under Defined</span>
<span class="t" style="top:551.40px;font-size:8.5px;line-height:10.20px;color:#222;letter-spacing:-0.358px;left:825.00px;">Editing Assembly</span>
<span class="t" style="top:551.40px;font-size:8.5px;line-height:10.20px;color:#222;letter-spacing:-0.633px;left:915.00px;">Custom</span>
<div class="a" style="left:820px;top:551px;width:1px;height:11px;background:#d0d0d0"></div>
<div class="a" style="left:890px;top:551px;width:1px;height:11px;background:#d0d0d0"></div>
<div class="a" style="left:841.6px;top:62px;width:1.5px;height:488px;background:#fdfdfd"></div>
<div class="a" style="left:841.6px;top:62px;width:2px;height:40px;background:#9a9aa2"></div>
<div class="a" style="left:843px;top:62px;width:0.9px;height:488px;background:#c6c6c6"></div>
<div class="a" style="left:843.8px;top:62px;width:156.2px;height:488px;background:#f7f7f7"></div>
<div class="a" style="left:843.6px;top:62px;width:156.4px;height:11.4px;background:#c7c7c7"></div>
<span class="t" style="top:61.20px;font-size:10px;line-height:12.00px;color:#222;font-weight:700;left:848.60px;">«</span>
<span class="t" style="top:63.28px;font-size:8.2px;line-height:9.84px;color:#151515;font-weight:700;letter-spacing:-0.453px;left:863.30px;">Appearances, Scenes, and Decals</span>
<div class="a" style="left:846px;top:91.3px;width:154px;height:1px;background:#dedede"></div>
<span class="t" style="top:97.10px;font-size:8.5px;line-height:10.20px;color:#222;letter-spacing:-0.360px;left:872.30px;">Appearances(color)</span>
<span class="t" style="top:109.70px;font-size:8.5px;line-height:10.20px;color:#222;letter-spacing:-0.843px;left:872.30px;">Scenes</span>
<span class="t" style="top:122.10px;font-size:8.5px;line-height:10.20px;color:#222;letter-spacing:-0.547px;left:872.30px;">Decals</span>
<span class="t" style="top:94.10px;font-size:12.5px;line-height:15.00px;color:#6f6f6f;left:849.60px;">›</span>
<span class="t" style="top:106.70px;font-size:12.5px;line-height:15.00px;color:#6f6f6f;left:849.60px;">›</span>
<span class="t" style="top:119.10px;font-size:12.5px;line-height:15.00px;color:#6f6f6f;left:849.60px;">›</span>
<div class="a" style="left:846.5px;top:150.6px;width:153.5px;height:2.6px;background:#8790ab"></div>
<div class="a" style="left:848px;top:156px;width:151px;height:31px;background:#ffff80;border:1px solid #6f6f38;box-sizing:border-box"></div>
<span class="t" style="top:158.20px;font-size:8.5px;line-height:10.20px;color:#222;letter-spacing:-0.290px;left:870.80px;">Select items to drag and drop.</span>
<div class="a" style="left:846.5px;top:190.6px;width:153.5px;height:2.6px;background:#8790ab"></div>
<span class="t" style="top:183.80px;font-size:9px;line-height:10.80px;color:#222;font-weight:700;left:917.50px;letter-spacing:0.6px;">...</span>
<div class="a" style="left:928.5px;top:548.4px;width:61px;height:1.1px;background:#4a4a4a"></div>
<svg width="1000" height="562" viewBox="0 0 1000 562" style="pointer-events:none">
<g fill="none" stroke="#d8332a" stroke-width="1.5" stroke-linecap="round" stroke-linejoin="round"><path d="M14.2,2.2 C17.5,1.2 19.5,3.6 16.6,6"/><path d="M9,13.4 L12.6,6.6 C17,6.2 17.6,10.6 10.2,12.6"/><path d="M21.6,6.8 C17.6,6 16.6,8.6 19.4,9.8 C22,11 20.6,13.6 16,12.6"/></g>
<text x="25.3" y="13.9" font-family="Liberation Sans, sans-serif" font-size="9.3" font-weight="700" font-style="italic" fill="#d8332a" textLength="25.5" lengthAdjust="spacingAndGlyphs">SOLID</text>
<text x="50.8" y="13.9" font-family="Liberation Sans, sans-serif" font-size="9.3" font-style="italic" fill="#dc4a41" textLength="26.3" lengthAdjust="spacingAndGlyphs">WORKS</text>
<path d="M314,11 L316.5,8.5 M315,6 L319,10 M316.5,5.5 L319.5,8.5 L318,10 L315,7Z" stroke="#2b6cb0" stroke-width="0.9" fill="#2b6cb0"/>
<rect x="324.5" y="1" width="1" height="15" fill="#cfcfcf"/>
<path d="M333.5,9 L338.7,4 L344,9 M335,8.5 V13.5 H342.5 V8.5" fill="none" stroke="#2f5f8f" stroke-width="1.3"/><rect x="337.5" y="9.5" width="2.5" height="4" fill="#7aa0c8"/>
<path d="M348.5,4 H353.5 L356,6.5 V14 H348.5Z" fill="#fff" stroke="#666" stroke-width="0.9"/>
<path d="M360.2,8.5 L363.40000000000003,8.5 L361.8,10.3Z" fill="#444"/>
<path d="M367,7 H371 L372,8 H377 V14 H367Z" fill="#f3e6a0" stroke="#777" stroke-width="0.8"/><path d="M372,3.5 L376,6 L372.5,8Z" fill="#2e9a3a"/>
<path d="M380.4,8.5 L383.6,8.5 L382,10.3Z" fill="#444"/>
<rect x="387.5" y="4" width="10.5" height="10" fill="#3b6ea5" stroke="#254a75" stroke-width="0.8"/><rect x="389.5" y="4.5" width="6" height="3.5" fill="#e8eef5"/><rect x="390" y="10" width="5.5" height="4" fill="#1e3b5e"/>
<path d="M400.9,8.5 L404.1,8.5 L402.5,10.3Z" fill="#444"/>
<rect x="408" y="7.5" width="10.5" height="5" fill="#4a7fb5" stroke="#2d5a88" stroke-width="0.7"/><rect x="410" y="4" width="6.5" height="3.5" fill="#fff" stroke="#777" stroke-width="0.6"/><rect x="410" y="11" width="6.5" height="3.5" fill="#fff" stroke="#777" stroke-width="0.6"/>
<path d="M421.4,8.5 L424.6,8.5 L423,10.3Z" fill="#444"/>
<path d="M430,6.5 H435 A3.2,3.2 0 0 1 435,13 H433.5" fill="none" stroke="#2f6db3" stroke-width="1.8"/><path d="M431.5,3.5 L428,6.5 L431.5,9.5Z" fill="#2f6db3"/>
<path d="M441.4,8.5 L444.6,8.5 L443,10.3Z" fill="#444"/>
<rect x="447" y="2" width="14" height="14" fill="#c9c9c9" stroke="#9a9a9a" stroke-width="0.7"/><rect x="461" y="2" width="6" height="14" fill="#fff" stroke="#9a9a9a" stroke-width="0.7"/><path d="M451.5,4.5 L451.5,13 L453.8,11 L455.3,14 L456.5,13.4 L455,10.6 L458,10.4Z" fill="#fff" stroke="#222" stroke-width="0.8"/>
<path d="M462.4,8.5 L465.6,8.5 L464,10.3Z" fill="#444"/>
<rect x="472.3" y="3.5" width="4.8" height="11" rx="1.5" fill="#222"/><circle cx="474.7" cy="6.3" r="1.5" fill="#e03020"/><circle cx="474.7" cy="11.3" r="1.5" fill="#27b13a"/>
<rect x="483" y="4" width="10" height="10.5" fill="#fff" stroke="#3b6ea5" stroke-width="0.9"/><rect x="484" y="5" width="3" height="8.5" fill="#3b6ea5"/><path d="M488,6.5 H492 M488,9.2 H492 M488,12 H492" stroke="#3b6ea5" stroke-width="0.9"/>
<circle cx="501" cy="9" r="3.6" fill="none" stroke="#888" stroke-width="1.6" stroke-dasharray="1.6 1"/><circle cx="501" cy="9" r="1.5" fill="none" stroke="#888" stroke-width="0.8"/>
<path d="M509.4,8.5 L512.6,8.5 L511,10.3Z" fill="#444"/>
<rect x="796.5" y="3.5" width="9.5" height="10" fill="#444"/><path d="M798.5,5.8 L801.5,8.5 L798.5,11.2" stroke="#fff" stroke-width="1" fill="none"/><path d="M802,11.5 H804.5" stroke="#fff" stroke-width="0.8"/>
<circle cx="907.5" cy="7.5" r="3.6" fill="none" stroke="#3d6fa8" stroke-width="1.1"/><path d="M904.8,10.2 L901.5,13.8" stroke="#3d6fa8" stroke-width="1.4"/>
<path d="M917.4,8.7 L920.6,8.7 L919,10.5Z" fill="#444"/>
<circle cx="933" cy="5.8" r="2" fill="none" stroke="#777" stroke-width="0.8"/><path d="M929.8,13.5 C929.8,8.3 936.2,8.3 936.2,13.5Z" fill="none" stroke="#777" stroke-width="0.8"/>
<text x="941.6" y="12.6" font-family="Liberation Sans, sans-serif" font-size="10.5" fill="#222">?</text>
<path d="M953.4,8.5 L956.6,8.5 L955,10.3Z" fill="#444"/>
<rect x="964" y="11.5" width="5" height="1.4" fill="#222"/>
<rect x="976" y="7.5" width="4.5" height="4" fill="none" stroke="#222" stroke-width="0.9"/><path d="M978,7.5 V5.5 H982.5 V9.5 H980.5" fill="none" stroke="#222" stroke-width="0.9"/>
<path d="M990,6 L995,11.5 M995,6 L990,11.5" stroke="#222" stroke-width="1.1"/>
<g transform="translate(0,0.6)">
<g fill="none" stroke="#333" stroke-width="1.1"><circle cx="21.7" cy="24" r="2.1"/><circle cx="28.4" cy="24.6" r="2.1"/><path d="M21.7,26 V32 M20,30 H23.4 M28.4,26.8 V31 M24,28.5 H26.5"/></g>
<path d="M23.4,54.400000000000006 L26.6,54.400000000000006 L25,56.2Z" fill="#333"/>
<rect x="67" y="27.5" width="5.5" height="5.5" fill="#f2c531" stroke="#7a5f10" stroke-width="0.6"/><rect x="71" y="30.5" width="5" height="5.5" fill="#4a8fd0" stroke="#1f4f88" stroke-width="0.6"/><path d="M73.5,27 L76.5,25.5 M74.5,28.5 L77,28 M66.5,34 L68.5,36" stroke="#e0362c" stroke-width="0.8"/>
<path d="M109.5,26.5 H118.5 L115.5,31.5 L118.5,36.5 H109.5 L112.5,31.5Z" fill="#f2c531" stroke="#7a5f10" stroke-width="0.6"/><path d="M117.5,31.5 H120 M108,31.5 H110.5" stroke="#555" stroke-width="0.9"/>
<rect x="147.5" y="27" width="10" height="8.5" fill="#f2c531" stroke="#7a5f10" stroke-width="0.6"/><rect x="148.5" y="31" width="8" height="4" fill="#3f7fc0"/><path d="M152.5,25.5 V30" stroke="#444" stroke-width="0.8" stroke-dasharray="1 0.8"/>
<rect x="185.5" y="26.5" width="7.5" height="7.5" rx="1.5" fill="#3f7fc0" stroke="#1f4f88" stroke-width="0.6"/><circle cx="189.3" cy="30.2" r="1.8" fill="#f2c531"/><path d="M186,33.5 L182.5,36.5" stroke="#d9a820" stroke-width="1.6"/>
<path d="M223.5,26 V35.5 M220.5,36.3 H226.5 M219,28.2 H228" stroke="#2f5f99" stroke-width="1.1" fill="none"/><path d="M217.5,31.8 H221 L219.2,28.5Z M226,31.8 H229.5 L227.8,28.5Z" fill="#f2c531" stroke="#7a5f10" stroke-width="0.4"/>
<path d="M256.5,28.5 L264,26.5 V34.5 L256.5,36.5Z" fill="#f4f4f4" stroke="#555" stroke-width="0.8"/><path d="M259,33.5 H261.5 V30.5" stroke="#333" stroke-width="0.8" fill="none"/>
<circle cx="293" cy="31.5" r="4.6" fill="#fff" stroke="#666" stroke-width="0.9"/><path d="M293,31.5 L295.5,28.5" stroke="#d9322a" stroke-width="1"/><path d="M293,27 V28.2 M288.6,31.5 H289.8 M296.2,31.5 H297.4" stroke="#666" stroke-width="0.6"/>
<rect x="324" y="28.5" width="5.5" height="7" fill="#f2c531" stroke="#7a5f10" stroke-width="0.5"/><rect x="327.5" y="26" width="5.5" height="6" fill="#4a8fd0" stroke="#1f4f88" stroke-width="0.5"/><rect x="329" y="31.5" width="4.5" height="4.5" fill="#f2c531" stroke="#7a5f10" stroke-width="0.5"/>
<rect x="368.6" y="26" width="4.2" height="10.5" rx="1.4" fill="#333"/><circle cx="370.7" cy="28.6" r="1.4" fill="#e03020"/><circle cx="370.7" cy="33.6" r="1.4" fill="#27b13a"/><circle cx="375.2" cy="32.5" r="2.6" fill="none" stroke="#2f5f99" stroke-width="0.9"/><path d="M375.2,32.5 L376.6,31" stroke="#2f5f99" stroke-width="0.7"/>
<defs><linearGradient id="cv" x1="0" y1="0" x2="1" y2="1"><stop offset="0" stop-color="#e0208a"/><stop offset="0.3" stop-color="#4040e0"/><stop offset="0.6" stop-color="#20c0c0"/><stop offset="0.85" stop-color="#40d040"/><stop offset="1" stop-color="#e0e020"/></linearGradient></defs><rect x="411.3" y="26.8" width="9.5" height="9.5" fill="url(#cv)" stroke="#555" stroke-width="0.4"/>
<path d="M449.5,28 L452.5,26.5 V36 L448.5,35Z" fill="#4a8fd0" stroke="#1f4f88" stroke-width="0.5"/><path d="M454,26.5 C458,29 458,33.5 454,36" fill="none" stroke="#666" stroke-width="0.8"/><path d="M453.2,25.5 V37" stroke="#444" stroke-width="0.6"/>
<rect x="489.5" y="26.5" width="6" height="7.5" fill="#fff" stroke="#555" stroke-width="0.7"/><rect x="492.5" y="28.5" width="6" height="7.5" fill="#fff" stroke="#555" stroke-width="0.7"/><path d="M494,31 H497 M494,33 H497" stroke="#3f7fc0" stroke-width="0.8"/>
<path d="M551.5,29 L558.5,24.5 M553,26.5 L557,29.5" stroke="#555" stroke-width="0.9"/><path d="M556,23.5 L559.5,23 " stroke="#2e9a3a" stroke-width="1.2"/><rect x="557.8" y="28.5" width="2" height="2" fill="#e03020"/>
<path d="M553.4,54.400000000000006 L556.6,54.400000000000006 L555,56.2Z" fill="#333"/>
<rect x="630.5" y="27" width="9" height="8" rx="1" fill="none" stroke="#c4c4c4" stroke-width="0.9"/><circle cx="635" cy="30.5" r="2" fill="none" stroke="#c4c4c4" stroke-width="0.8"/><path d="M629.5,36 H640.5" stroke="#c4c4c4" stroke-width="0.9"/>
<path d="M697.5,27.5 L705.5,26 L706,35 L698,36Z" fill="#3f7fc0"/><path d="M699.5,29 L704,28.5 L704.5,33 L700.5,34Z" fill="#f2c531"/><circle cx="702" cy="31" r="1.3" fill="#e03020"/><path d="M696,36.5 L698.5,33" stroke="#2e9a3a" stroke-width="1"/>
<path d="M753.5,29 L757,26.5 V34 L753.5,36.5Z" fill="#e9a0a0"/><path d="M756.5,28.5 L760,26 V33.5 L756.5,36Z" fill="#a0d8a0"/><path d="M759.5,28 L763,25.5 V33 L759.5,35.5Z" fill="#9cc3e8"/>
<rect x="813" y="26.5" width="6.5" height="6.5" fill="#2b2f7e"/><rect x="815.5" y="29.5" width="6.5" height="6.5" fill="#d9202f"/>
<path d="M858.5,33 L861,27.5 H868 L866,33Z" fill="#eee" stroke="#444" stroke-width="0.8"/><path d="M858.5,33 V35.5 H866 V33 M860.8,30.3 H866.8" stroke="#444" stroke-width="0.8" fill="none"/>
<circle cx="911.5" cy="31.5" r="4.6" fill="#2f6fa8"/><circle cx="911.5" cy="31.5" r="2.4" fill="#fff"/><path d="M911.5,29 L912.2,30.8 L914,31 L912.6,32.2 L913,34 L911.5,33 L910,34 L910.4,32.2 L909,31 L910.8,30.8Z" fill="#2f6fa8"/>
</g>
<circle cx="419.9" cy="68.8" r="3" fill="#dfeaf5" stroke="#5a86b5" stroke-width="1"/><path d="M417.7,71 L414.9,74" stroke="#5a86b5" stroke-width="1.4"/>
<circle cx="432.5" cy="68.8" r="3" fill="#dfeaf5" stroke="#7f9fc0" stroke-width="1"/><path d="M430.3,71 L427.5,74" stroke="#7f9fc0" stroke-width="1.4"/>
<path d="M441,73.5 L449,67 L451,68.5 L443.5,75Z" fill="#ddd" stroke="#888" stroke-width="0.6"/><path d="M446.5,73.8 H451 M448.5,72 L446.5,73.8 L448.5,75.6" stroke="#2f6db3" stroke-width="1" fill="none"/>
<rect x="452.9" y="63" width="12.8" height="13.8" fill="#c3c3c3" stroke="#777" stroke-width="0.8"/><path d="M455,67 L458.5,65.5 V74 L455,75.5Z M460,66.5 L463.5,65 V73.5 L460,75Z" fill="#2f6593" stroke="#173a5c" stroke-width="0.5"/>
<path d="M469.5,75 L473,67 L476.5,75" stroke="#3f7fc0" stroke-width="1" fill="none"/><path d="M469.5,68.5 L475.5,65 L477,67 L471,70.5Z" fill="#f0a030" stroke="#a06010" stroke-width="0.4"/>
<path d="M481.5,68 L484,65.5 H491 V72.5 L488.5,75 H481.5Z" fill="#9cc3e8" stroke="#3a6a9a" stroke-width="0.6"/><path d="M481.5,68 H488.5 V75 M488.5,68 L491,65.5" stroke="#3a6a9a" stroke-width="0.6" fill="none"/><rect x="488" y="64.5" width="3.5" height="3.5" fill="#fff" stroke="#3a6a9a" stroke-width="0.5"/>
<path d="M494.59999999999997,69.5 L497.8,69.5 L496.2,71.3Z" fill="#666"/>
<path d="M503,67 L506,65 H512 V73 L509,75.5 H503Z" fill="#7fb2e0" stroke="#3a6a9a" stroke-width="0.6"/><path d="M503,67 H509 V75.5 M509,67 L512,65" stroke="#3a6a9a" stroke-width="0.6" fill="none"/>
<path d="M515.6,69.5 L518.8000000000001,69.5 L517.2,71.3Z" fill="#666"/>
<path d="M523.5,70 C526,66 531,66 533.5,70 C531,73.5 526,73.5 523.5,70Z" fill="#d8d8d8" stroke="#8a8a8a" stroke-width="0.7"/><circle cx="528.5" cy="69.8" r="1.7" fill="#777"/><path d="M528.5,72.5 V75" stroke="#8a8a8a" stroke-width="0.7"/>
<path d="M536.4,69.5 L539.6,69.5 L538,71.3Z" fill="#666"/>
<path d="M546,65.5 L552,70 L546,74.5Z" fill="#e4e4e4" stroke="#d0d0d0" stroke-width="0.6"/>
<g><path d="M561.7,68.5 L561.7,64.5 A4,4 0 0 1 565.7,68.5Z" fill="#e03a2c"/><path d="M561.7,68.5 L565.7,68.5 A4,4 0 0 1 561.7,72.5Z" fill="#2f9a3a"/><path d="M561.7,68.5 L561.7,72.5 A4,4 0 0 1 557.7,68.5Z" fill="#f2c531"/><path d="M561.7,68.5 L557.7,68.5 A4,4 0 0 1 561.7,64.5Z" fill="#2f6fd0"/></g>
<path d="M556.5,72 H567 V76 H556.5Z" fill="#333"/><path d="M558.5,72 h2 v2 h-2z M562.5,72 h2 v2 h-2z M556.5,74 h2 v2 h-2z M560.5,74 h2 v2 h-2z M564.5,74 h2 v2 h-2z" fill="#fff"/>
<path d="M571.0,69.5 L574.2,69.5 L572.6,71.3Z" fill="#666"/>
<rect x="577.5" y="65.5" width="10.5" height="7" fill="#e6e6e6" stroke="#777" stroke-width="0.8"/><path d="M580.5,75.5 H585 M582.7,72.5 V75.5" stroke="#777" stroke-width="0.9"/>
<path d="M591.6,69.5 L594.8000000000001,69.5 L593.2,71.3Z" fill="#666"/>
<g stroke="#fff" stroke-width="1" fill="none" opacity="0.22"><rect x="773" y="67" width="3" height="6"/><rect x="777" y="67" width="3" height="6"/><rect x="787" y="67" width="3" height="6"/><rect x="791" y="67" width="3" height="6"/><path d="M803,72 H808"/><rect x="815.5" y="68" width="5" height="4.5"/><path d="M817.5,68 V66 H822.5 V70.5 H820.5"/><path d="M829,67.5 L834,72.5 M834,67.5 L829,72.5" stroke-width="1.4"/></g>
<rect x="825.5" y="104.5" width="18" height="110" fill="#dedede"/>
<rect x="826" y="105" width="17" height="15.5" fill="#e3e3e3" stroke="#bdbdbd" stroke-width="0.8"/>
<rect x="826" y="120.5" width="17" height="15.5" fill="#e3e3e3" stroke="#bdbdbd" stroke-width="0.8"/>
<rect x="826" y="136" width="17" height="15.5" fill="#e3e3e3" stroke="#bdbdbd" stroke-width="0.8"/>
<rect x="826" y="151.5" width="17" height="15.7" fill="#e3e3e3" stroke="#bdbdbd" stroke-width="0.8"/>
<rect x="826" y="167.2" width="17" height="15.4" fill="#ffffff" stroke="#bdbdbd" stroke-width="0.8"/>
<rect x="826" y="182.6" width="17" height="15.6" fill="#e3e3e3" stroke="#bdbdbd" stroke-width="0.8"/>
<rect x="826" y="198.2" width="17" height="15.6" fill="#e3e3e3" stroke="#bdbdbd" stroke-width="0.8"/>
<path d="M829.5,113 L834.7,108 L840,113 M831,112.5 V118 H838.5 V112.5" fill="none" stroke="#2f5f8f" stroke-width="1.3"/><rect x="833.5" y="114" width="2.5" height="4" fill="#9ab8d8"/>
<path d="M831,125.5 L834,123.5 H839 V130.5 L836,133 H831Z M831,125.5 H836 V133 M836,125.5 L839,123.5 M833.5,124 V131.5" fill="#eaeaea" stroke="#777" stroke-width="0.7"/>
<path d="M830,139.5 H834 L835,140.5 H838.5 V142.5 H840.5 L838.5,148 H830Z" fill="#fbfbfb" stroke="#666" stroke-width="0.8"/>
<rect x="830" y="154.5" width="10" height="9.5" fill="#f2c531" stroke="#8a6d10" stroke-width="0.6"/><path d="M831.5,156.5 L838.5,162 M838.5,156.5 L831.5,162" stroke="#fff" stroke-width="1.4"/><rect x="833" y="157.7" width="4" height="3" fill="#3f7fc0"/>
<g><path d="M834.7,175 L834.7,170.7 A4.3,4.3 0 0 1 839.0,175Z" fill="#e03a2c"/><path d="M834.7,175 L839.0,175 A4.3,4.3 0 0 1 834.7,179.3Z" fill="#2f9a3a"/><path d="M834.7,175 L834.7,179.3 A4.3,4.3 0 0 1 830.4000000000001,175Z" fill="#f2c531"/><path d="M834.7,175 L830.4000000000001,175 A4.3,4.3 0 0 1 834.7,170.7Z" fill="#2f6fd0"/></g>
<rect x="829.5" y="185.5" width="10.5" height="10" fill="#fff" stroke="#2f6593" stroke-width="0.9"/><rect x="830.5" y="186.5" width="3" height="8" fill="#2f6593"/><path d="M834.5,188 H839 M834.5,190.6 H839 M834.5,193.2 H839" stroke="#2f6593" stroke-width="0.9"/>
<path d="M829.5,201.5 H837.5 V207 H833 L831,209 V207 H829.5Z" fill="#4a8fd0" stroke="#1f4f88" stroke-width="0.5"/><path d="M834,205 H841 V210 H839.5 V212 L837.5,210 H834Z" fill="#f4f4f4" stroke="#777" stroke-width="0.5"/>
<rect x="654" y="349.5" width="101.5" height="11.5" fill="#fff" stroke="#8a8a8a" stroke-width="0.8"/>
<path d="M990.5,70.5 L992.5,68.5 M991.5,66 L995,69.5 M993,65.5 L995.5,68 L994.3,69.2 L991.8,66.7Z" stroke="#222" stroke-width="0.9" fill="#222"/>
<circle cx="853.5" cy="82.6" r="3.6" fill="none" stroke="#cfcfcf" stroke-width="0.9"/><path d="M851.7,82.6 H855.3" stroke="#cfcfcf" stroke-width="0.9"/>
<circle cx="867.5" cy="82.6" r="3.6" fill="none" stroke="#cfcfcf" stroke-width="0.9"/><path d="M865.7,82.6 H869.3" stroke="#cfcfcf" stroke-width="0.9"/>
<path d="M876.4,82.0 L879.6,82.0 L878,83.8Z" fill="#555"/>
<rect x="886.5" y="79" width="7" height="7" rx="2" fill="#e6e6e6" stroke="#d2d2d2" stroke-width="0.8"/>
<rect x="901.1" y="79" width="7" height="7" rx="2" fill="#e6e6e6" stroke="#d2d2d2" stroke-width="0.8"/>
<rect x="914.5" y="79" width="7" height="7" rx="2" fill="#e6e6e6" stroke="#d2d2d2" stroke-width="0.8"/>
<path d="M928.5,82 A3.6,3.6 0 0 1 935,80.3 M935.5,83.2 A3.6,3.6 0 0 1 929,84.9" fill="none" stroke="#2f7fc0" stroke-width="1.5"/><path d="M935.8,78.2 V81.2 H932.8Z M928.2,87 V84 H931.2Z" fill="#2f7fc0"/>
<path d="M946,86.5 V80.5 M943.5,82.5 L946,79.5 L948.5,82.5" stroke="#d2d2d2" stroke-width="1.1" fill="none"/>
<g><path d="M864.4,101.5 L864.4,97.6 A3.9,3.9 0 0 1 868.3,101.5Z" fill="#e03a2c"/><path d="M864.4,101.5 L868.3,101.5 A3.9,3.9 0 0 1 864.4,105.4Z" fill="#2f9a3a"/><path d="M864.4,101.5 L864.4,105.4 A3.9,3.9 0 0 1 860.5,101.5Z" fill="#f2c531"/><path d="M864.4,101.5 L860.5,101.5 A3.9,3.9 0 0 1 864.4,97.6Z" fill="#2f6fd0"/></g>
<g><path d="M864.4,113.3 L864.4,109.6 A3.7,3.7 0 0 1 868.1,113.3Z" fill="#e03a2c"/><path d="M864.4,113.3 L868.1,113.3 A3.7,3.7 0 0 1 864.4,117.0Z" fill="#2f9a3a"/><path d="M864.4,113.3 L864.4,117.0 A3.7,3.7 0 0 1 860.6999999999999,113.3Z" fill="#f2c531"/><path d="M864.4,113.3 L860.6999999999999,113.3 A3.7,3.7 0 0 1 864.4,109.6Z" fill="#2f6fd0"/></g>
<path d="M859.8,116.5 H869 V119.5 H859.8Z" fill="#222"/><path d="M861.5,116.5 h1.8 v1.5 h-1.8z M865,116.5 h1.8 v1.5 h-1.8z M859.8,118 h1.7 v1.5 h-1.7z M863.3,118 h1.7 v1.5 h-1.7z M866.8,118 h1.7 v1.5 h-1.7z" fill="#fff"/>
<rect x="861" y="122.5" width="7" height="9.5" rx="1.5" fill="#f1f1f1" stroke="#666" stroke-width="0.8"/><ellipse cx="864.5" cy="123.5" rx="3.5" ry="1.3" fill="#ddd" stroke="#666" stroke-width="0.6"/><rect x="862.5" y="127" width="4" height="3" fill="#4a8fd0"/>
<path d="M953,555.5 L954.5,557.5 L956,555.5Z" fill="#444"/>
<circle cx="993.5" cy="556.5" r="3.2" fill="#e0e0e0" stroke="#666" stroke-width="0.8"/><circle cx="996" cy="558.5" r="2" fill="#c8c8c8" stroke="#666" stroke-width="0.6"/>
<path d="M22,541.5 L18.5,544.5 L22,547.5Z" fill="#666e8e"/>
<path d="M32,541.5 L28.5,544.5 L32,547.5Z" fill="#666e8e"/>
<path d="M38,541.5 L41.5,544.5 L38,547.5Z" fill="#666e8e"/>
<path d="M48,541.5 L51.5,544.5 L48,547.5Z" fill="#666e8e"/>
<path d="M16.5,541.5 V547.5 M53.5,541.5 V547.5 M25.5,540.5 V548.5 M35.5,540.5 V548.5 M45.5,540.5 V548.5" stroke="#8088a4" stroke-width="0.8"/>
<g transform="translate(11.2,97.9) scale(1.05)"><path d="M-3.6,-2.6 L-1.4,-4.4 L1.6,-3.4 L2.2,-1.2 L4.8,-0.2 L4.8,2.6 L1.4,4.6 L-4.4,2.2 L-4.6,-0.4Z" fill="#f4cc22" stroke="#94750f" stroke-width="0.8" stroke-linejoin="round"/><path d="M-4.4,-0.2 L-1,1 L1.4,0 L4.6,1 M-1,1 L-1,2.6 L1.4,3.4 L1.4,4.4" fill="none" stroke="#94750f" stroke-width="0.6"/><ellipse cx="-0.8" cy="-2.4" rx="1.2" ry="0.8" fill="none" stroke="#94750f" stroke-width="0.55"/></g>
<rect x="10.3" y="96" width="3.4" height="3.4" fill="#3f8fd8" stroke="#1f4f88" stroke-width="0.5"/>
<rect x="27" y="93.5" width="10" height="10.5" fill="#fff" stroke="#2f5f8f" stroke-width="0.9"/><rect x="28" y="94.5" width="2.8" height="8.5" fill="#2f5f8f"/><path d="M32,96.2 H36 M32,98.8 H36 M32,101.4 H36" stroke="#2f5f8f" stroke-width="0.9"/>
<g fill="none" stroke="#444" stroke-width="0.9"><path d="M49.5,93.5 V103.5 M49.5,96 H52 M49.5,101 H52"/><rect x="52" y="94" width="3.6" height="3.6"/><rect x="52" y="99.5" width="3.6" height="3.6"/><path d="M53,95.8 l0.8,0.8 l1.2,-1.6"/></g>
<g fill="none" stroke="#222" stroke-width="1"><circle cx="73.7" cy="98.7" r="3.1"/><path d="M73.7,93.2 V104.2 M68.2,98.7 H79.2"/></g>
<g><path d="M94.8,98.7 L94.8,94.3 A4.4,4.4 0 0 1 99.2,98.7Z" fill="#e03a2c"/><path d="M94.8,98.7 L99.2,98.7 A4.4,4.4 0 0 1 94.8,103.10000000000001Z" fill="#2f9a3a"/><path d="M94.8,98.7 L94.8,103.10000000000001 A4.4,4.4 0 0 1 90.39999999999999,98.7Z" fill="#f2c531"/><path d="M94.8,98.7 L90.39999999999999,98.7 A4.4,4.4 0 0 1 94.8,94.3Z" fill="#2f6fd0"/></g>
<path d="M94.8,98.7 L98,102" stroke="#222" stroke-width="1"/>
<path d="M4.2,110.8 H11.8 L9,114.2 V118 L7,117 V114.2Z" fill="#dce9f5" stroke="#2f5f8f" stroke-width="0.9"/>
<path d="M12.9,115.7 L16.1,115.7 L14.5,117.5Z" fill="#444"/>
<path d="M15.5,129.0 H21 M19,126.6 L21.8,129.0 L19,131.4" stroke="#2f6db3" stroke-width="1.3" fill="none"/>
<g transform="translate(30.7,129.0)" fill="none" stroke="#6a6a6a" stroke-width="0.9"><path d="M-4.5,0.5 L1.5,-4 L4,-1.5 L-2,3Z"/><circle cx="-2.6" cy="2" r="1.6"/><path d="M0.5,1.5 L-1,5 M1,1.5 L3.5,5 M2.5,-4.5 L4.5,-2.5"/></g>
<g transform="translate(30.7,141.475)" fill="none" stroke="#6a6a6a" stroke-width="0.9"><path d="M-4.5,0.5 L1.5,-4 L4,-1.5 L-2,3Z"/><circle cx="-2.6" cy="2" r="1.6"/><path d="M0.5,1.5 L-1,5 M1,1.5 L3.5,5 M2.5,-4.5 L4.5,-2.5"/></g>
<g transform="translate(30.7,153.95)" fill="none" stroke="#6a6a6a" stroke-width="0.9"><path d="M-4.5,0.5 L1.5,-4 L4,-1.5 L-2,3Z"/><circle cx="-2.6" cy="2" r="1.6"/><path d="M0.5,1.5 L-1,5 M1,1.5 L3.5,5 M2.5,-4.5 L4.5,-2.5"/></g>
<g transform="translate(30.7,166.425)" fill="none" stroke="#6a6a6a" stroke-width="0.9"><path d="M-4.5,0.5 L1.5,-4 L4,-1.5 L-2,3Z"/><circle cx="-2.6" cy="2" r="1.6"/><path d="M0.5,1.5 L-1,5 M1,1.5 L3.5,5 M2.5,-4.5 L4.5,-2.5"/></g>
<path d="M15.5,175.9 L21.9,173.9 V181.9 L15.5,183.9Z" fill="#fafafa" stroke="#777" stroke-width="0.8"/><path d="M17.5,177.3 V180.70000000000002" stroke="#999" stroke-width="0.6"/>
<path d="M15.5,188.375 L21.9,186.375 V194.375 L15.5,196.375Z" fill="#fafafa" stroke="#777" stroke-width="0.8"/><path d="M17.5,189.775 V193.175" stroke="#999" stroke-width="0.6"/>
<path d="M15.5,200.85 L21.9,198.85 V206.85 L15.5,208.85Z" fill="#fafafa" stroke="#777" stroke-width="0.8"/><path d="M17.5,202.25 V205.65" stroke="#999" stroke-width="0.6"/>
<path d="M15.5,212.125 V219.52499999999998 H22.8" stroke="#222" stroke-width="1.1" fill="none"/><path d="M14,213.325 L15.5,211.325 L17,213.325Z M21.6,218.02499999999998 L23.6,219.52499999999998 L21.6,221.02499999999998Z" fill="#222"/>
<path d="M4.9,338.775 L7.5,341.075 L4.9,343.375Z" fill="#555"/>
<g transform="translate(19,340.47499999999997) scale(1.0)"><path d="M-3.6,-2.6 L-1.4,-4.4 L1.6,-3.4 L2.2,-1.2 L4.8,-0.2 L4.8,2.6 L1.4,4.6 L-4.4,2.2 L-4.6,-0.4Z" fill="#f4cc22" stroke="#94750f" stroke-width="0.8" stroke-linejoin="round"/><path d="M-4.4,-0.2 L-1,1 L1.4,0 L4.6,1 M-1,1 L-1,2.6 L1.4,3.4 L1.4,4.4" fill="none" stroke="#94750f" stroke-width="0.6"/><ellipse cx="-0.8" cy="-2.4" rx="1.2" ry="0.8" fill="none" stroke="#94750f" stroke-width="0.55"/></g>
<g transform="translate(31.2,341.075) scale(1.08)"><path d="M-2.9,-0.7 L-0.6,0.3 L3.1,-1.5 L3.1,1.3 L-0.2,2.6 L-2.9,1.3Z" fill="#4a94bd"/><path d="M-5.2,-1.7 L0.1,-4.5 L5.1,-2.7 L-0.6,0.1Z" fill="#236f9c"/><path d="M-2.9,-1.5 L-4.2,2.8" stroke="#222" stroke-width="0.8"/></g>
<path d="M4.9,363.72499999999997 L7.5,366.025 L4.9,368.325Z" fill="#555"/>
<g transform="translate(19,365.42499999999995) scale(1.0)"><path d="M-3.6,-2.6 L-1.4,-4.4 L1.6,-3.4 L2.2,-1.2 L4.8,-0.2 L4.8,2.6 L1.4,4.6 L-4.4,2.2 L-4.6,-0.4Z" fill="#f4cc22" stroke="#94750f" stroke-width="0.8" stroke-linejoin="round"/><path d="M-4.4,-0.2 L-1,1 L1.4,0 L4.6,1 M-1,1 L-1,2.6 L1.4,3.4 L1.4,4.4" fill="none" stroke="#94750f" stroke-width="0.6"/><ellipse cx="-0.8" cy="-2.4" rx="1.2" ry="0.8" fill="none" stroke="#94750f" stroke-width="0.55"/></g>
<g transform="translate(31.2,366.025) scale(1.08)"><path d="M-2.9,-0.7 L-0.6,0.3 L3.1,-1.5 L3.1,1.3 L-0.2,2.6 L-2.9,1.3Z" fill="#4a94bd"/><path d="M-5.2,-1.7 L0.1,-4.5 L5.1,-2.7 L-0.6,0.1Z" fill="#236f9c"/><path d="M-2.9,-1.5 L-4.2,2.8" stroke="#222" stroke-width="0.8"/></g>
<path d="M4.9,226.5 L7.5,228.8 L4.9,231.10000000000002Z" fill="#555"/>
<g transform="translate(19,228.20000000000002) scale(1.0)"><path d="M-3.6,-2.6 L-1.4,-4.4 L1.6,-3.4 L2.2,-1.2 L4.8,-0.2 L4.8,2.6 L1.4,4.6 L-4.4,2.2 L-4.6,-0.4Z" fill="#f4cc22" stroke="#94750f" stroke-width="0.8" stroke-linejoin="round"/><path d="M-4.4,-0.2 L-1,1 L1.4,0 L4.6,1 M-1,1 L-1,2.6 L1.4,3.4 L1.4,4.4" fill="none" stroke="#94750f" stroke-width="0.6"/><ellipse cx="-0.8" cy="-2.4" rx="1.2" ry="0.8" fill="none" stroke="#94750f" stroke-width="0.55"/></g>
<g transform="translate(31.2,228.8) scale(1.08)"><path d="M-2.9,-0.7 L-0.6,0.3 L3.1,-1.5 L3.1,1.3 L-0.2,2.6 L-2.9,1.3Z" fill="#4a94bd"/><path d="M-5.2,-1.7 L0.1,-4.5 L5.1,-2.7 L-0.6,0.1Z" fill="#236f9c"/><path d="M-2.9,-1.5 L-4.2,2.8" stroke="#222" stroke-width="0.8"/></g>
<path d="M4.9,463.525 L7.5,465.825 L4.9,468.125Z" fill="#555"/>
<g transform="translate(19,465.22499999999997) scale(1.0)"><path d="M-3.6,-2.6 L-1.4,-4.4 L1.6,-3.4 L2.2,-1.2 L4.8,-0.2 L4.8,2.6 L1.4,4.6 L-4.4,2.2 L-4.6,-0.4Z" fill="#f4cc22" stroke="#94750f" stroke-width="0.8" stroke-linejoin="round"/><path d="M-4.4,-0.2 L-1,1 L1.4,0 L4.6,1 M-1,1 L-1,2.6 L1.4,3.4 L1.4,4.4" fill="none" stroke="#94750f" stroke-width="0.6"/><ellipse cx="-0.8" cy="-2.4" rx="1.2" ry="0.8" fill="none" stroke="#94750f" stroke-width="0.55"/></g>
<g transform="translate(31.2,465.825) scale(1.08)"><path d="M-2.9,-0.7 L-0.6,0.3 L3.1,-1.5 L3.1,1.3 L-0.2,2.6 L-2.9,1.3Z" fill="#4a94bd"/><path d="M-5.2,-1.7 L0.1,-4.5 L5.1,-2.7 L-0.6,0.1Z" fill="#236f9c"/><path d="M-2.9,-1.5 L-4.2,2.8" stroke="#222" stroke-width="0.8"/></g>
<path d="M4.9,263.925 L7.5,266.225 L4.9,268.52500000000003Z" fill="#555"/>
<g transform="translate(19,265.625) scale(1.0)"><path d="M-3.6,-2.6 L-1.4,-4.4 L1.6,-3.4 L2.2,-1.2 L4.8,-0.2 L4.8,2.6 L1.4,4.6 L-4.4,2.2 L-4.6,-0.4Z" fill="#f4cc22" stroke="#94750f" stroke-width="0.8" stroke-linejoin="round"/><path d="M-4.4,-0.2 L-1,1 L1.4,0 L4.6,1 M-1,1 L-1,2.6 L1.4,3.4 L1.4,4.4" fill="none" stroke="#94750f" stroke-width="0.6"/><ellipse cx="-0.8" cy="-2.4" rx="1.2" ry="0.8" fill="none" stroke="#94750f" stroke-width="0.55"/></g>
<g transform="translate(31.2,266.225) scale(1.08)"><path d="M-2.9,-0.7 L-0.6,0.3 L3.1,-1.5 L3.1,1.3 L-0.2,2.6 L-2.9,1.3Z" fill="#4a94bd"/><path d="M-5.2,-1.7 L0.1,-4.5 L5.1,-2.7 L-0.6,0.1Z" fill="#236f9c"/><path d="M-2.9,-1.5 L-4.2,2.8" stroke="#222" stroke-width="0.8"/></g>
<path d="M4.9,276.4 L7.5,278.7 L4.9,281.0Z" fill="#555"/>
<g transform="translate(19,278.09999999999997) scale(1.0)"><path d="M-3.6,-2.6 L-1.4,-4.4 L1.6,-3.4 L2.2,-1.2 L4.8,-0.2 L4.8,2.6 L1.4,4.6 L-4.4,2.2 L-4.6,-0.4Z" fill="#f4cc22" stroke="#94750f" stroke-width="0.8" stroke-linejoin="round"/><path d="M-4.4,-0.2 L-1,1 L1.4,0 L4.6,1 M-1,1 L-1,2.6 L1.4,3.4 L1.4,4.4" fill="none" stroke="#94750f" stroke-width="0.6"/><ellipse cx="-0.8" cy="-2.4" rx="1.2" ry="0.8" fill="none" stroke="#94750f" stroke-width="0.55"/></g>
<g transform="translate(31.2,278.7) scale(1.08)"><path d="M-2.9,-0.7 L-0.6,0.3 L3.1,-1.5 L3.1,1.3 L-0.2,2.6 L-2.9,1.3Z" fill="#4a94bd"/><path d="M-5.2,-1.7 L0.1,-4.5 L5.1,-2.7 L-0.6,0.1Z" fill="#236f9c"/><path d="M-2.9,-1.5 L-4.2,2.8" stroke="#222" stroke-width="0.8"/></g>
<g transform="translate(19,328.0) scale(1.0)"><path d="M-3.6,-2.6 L-1.4,-4.4 L1.6,-3.4 L2.2,-1.2 L4.8,-0.2 L4.8,2.6 L1.4,4.6 L-4.4,2.2 L-4.6,-0.4Z" fill="#fdfdfd" stroke="#3a3a3a" stroke-width="0.8" stroke-linejoin="round"/><path d="M-4.4,-0.2 L-1,1 L1.4,0 L4.6,1 M-1,1 L-1,2.6 L1.4,3.4 L1.4,4.4" fill="none" stroke="#3a3a3a" stroke-width="0.6"/><ellipse cx="-0.8" cy="-2.4" rx="1.2" ry="0.8" fill="none" stroke="#3a3a3a" stroke-width="0.55"/></g>
<g transform="translate(31.2,328.6) scale(1.08)"><path d="M-2.9,-0.7 L-0.6,0.3 L3.1,-1.5 L3.1,1.3 L-0.2,2.6 L-2.9,1.3Z" fill="#4a94bd"/><path d="M-5.2,-1.7 L0.1,-4.5 L5.1,-2.7 L-0.6,0.1Z" fill="#236f9c"/><path d="M-2.9,-1.5 L-4.2,2.8" stroke="#222" stroke-width="0.8"/></g>
<g transform="translate(19,352.94999999999993) scale(1.0)"><path d="M-3.6,-2.6 L-1.4,-4.4 L1.6,-3.4 L2.2,-1.2 L4.8,-0.2 L4.8,2.6 L1.4,4.6 L-4.4,2.2 L-4.6,-0.4Z" fill="#fdfdfd" stroke="#3a3a3a" stroke-width="0.8" stroke-linejoin="round"/><path d="M-4.4,-0.2 L-1,1 L1.4,0 L4.6,1 M-1,1 L-1,2.6 L1.4,3.4 L1.4,4.4" fill="none" stroke="#3a3a3a" stroke-width="0.6"/><ellipse cx="-0.8" cy="-2.4" rx="1.2" ry="0.8" fill="none" stroke="#3a3a3a" stroke-width="0.55"/></g>
<g transform="translate(31.2,353.54999999999995) scale(1.08)"><path d="M-2.9,-0.7 L-0.6,0.3 L3.1,-1.5 L3.1,1.3 L-0.2,2.6 L-2.9,1.3Z" fill="#4a94bd"/><path d="M-5.2,-1.7 L0.1,-4.5 L5.1,-2.7 L-0.6,0.1Z" fill="#236f9c"/><path d="M-2.9,-1.5 L-4.2,2.8" stroke="#222" stroke-width="0.8"/></g>
<g transform="translate(19,240.67499999999998) scale(1.0)"><path d="M-3.6,-2.6 L-1.4,-4.4 L1.6,-3.4 L2.2,-1.2 L4.8,-0.2 L4.8,2.6 L1.4,4.6 L-4.4,2.2 L-4.6,-0.4Z" fill="#fdfdfd" stroke="#3a3a3a" stroke-width="0.8" stroke-linejoin="round"/><path d="M-4.4,-0.2 L-1,1 L1.4,0 L4.6,1 M-1,1 L-1,2.6 L1.4,3.4 L1.4,4.4" fill="none" stroke="#3a3a3a" stroke-width="0.6"/><ellipse cx="-0.8" cy="-2.4" rx="1.2" ry="0.8" fill="none" stroke="#3a3a3a" stroke-width="0.55"/></g>
<g transform="translate(31.2,241.27499999999998) scale(1.08)"><path d="M-2.9,-0.7 L-0.6,0.3 L3.1,-1.5 L3.1,1.3 L-0.2,2.6 L-2.9,1.3Z" fill="#4a94bd"/><path d="M-5.2,-1.7 L0.1,-4.5 L5.1,-2.7 L-0.6,0.1Z" fill="#236f9c"/><path d="M-2.9,-1.5 L-4.2,2.8" stroke="#222" stroke-width="0.8"/></g>
<g transform="translate(19,253.15) scale(1.0)"><path d="M-3.6,-2.6 L-1.4,-4.4 L1.6,-3.4 L2.2,-1.2 L4.8,-0.2 L4.8,2.6 L1.4,4.6 L-4.4,2.2 L-4.6,-0.4Z" fill="#fdfdfd" stroke="#3a3a3a" stroke-width="0.8" stroke-linejoin="round"/><path d="M-4.4,-0.2 L-1,1 L1.4,0 L4.6,1 M-1,1 L-1,2.6 L1.4,3.4 L1.4,4.4" fill="none" stroke="#3a3a3a" stroke-width="0.6"/><ellipse cx="-0.8" cy="-2.4" rx="1.2" ry="0.8" fill="none" stroke="#3a3a3a" stroke-width="0.55"/></g>
<g transform="translate(31.2,253.75) scale(1.08)"><path d="M-2.9,-0.7 L-0.6,0.3 L3.1,-1.5 L3.1,1.3 L-0.2,2.6 L-2.9,1.3Z" fill="#4a94bd"/><path d="M-5.2,-1.7 L0.1,-4.5 L5.1,-2.7 L-0.6,0.1Z" fill="#236f9c"/><path d="M-2.9,-1.5 L-4.2,2.8" stroke="#222" stroke-width="0.8"/></g>
<g transform="translate(19,303.04999999999995) scale(1.0)"><path d="M-3.6,-2.6 L-1.4,-4.4 L1.6,-3.4 L2.2,-1.2 L4.8,-0.2 L4.8,2.6 L1.4,4.6 L-4.4,2.2 L-4.6,-0.4Z" fill="#fdfdfd" stroke="#3a3a3a" stroke-width="0.8" stroke-linejoin="round"/><path d="M-4.4,-0.2 L-1,1 L1.4,0 L4.6,1 M-1,1 L-1,2.6 L1.4,3.4 L1.4,4.4" fill="none" stroke="#3a3a3a" stroke-width="0.6"/><ellipse cx="-0.8" cy="-2.4" rx="1.2" ry="0.8" fill="none" stroke="#3a3a3a" stroke-width="0.55"/></g>
<g transform="translate(31.2,303.65) scale(1.08)"><path d="M-2.9,-0.7 L-0.6,0.3 L3.1,-1.5 L3.1,1.3 L-0.2,2.6 L-2.9,1.3Z" fill="#4a94bd"/><path d="M-5.2,-1.7 L0.1,-4.5 L5.1,-2.7 L-0.6,0.1Z" fill="#236f9c"/><path d="M-2.9,-1.5 L-4.2,2.8" stroke="#222" stroke-width="0.8"/></g>
<g transform="translate(19,315.525) scale(1.0)"><path d="M-3.6,-2.6 L-1.4,-4.4 L1.6,-3.4 L2.2,-1.2 L4.8,-0.2 L4.8,2.6 L1.4,4.6 L-4.4,2.2 L-4.6,-0.4Z" fill="#fdfdfd" stroke="#3a3a3a" stroke-width="0.8" stroke-linejoin="round"/><path d="M-4.4,-0.2 L-1,1 L1.4,0 L4.6,1 M-1,1 L-1,2.6 L1.4,3.4 L1.4,4.4" fill="none" stroke="#3a3a3a" stroke-width="0.6"/><ellipse cx="-0.8" cy="-2.4" rx="1.2" ry="0.8" fill="none" stroke="#3a3a3a" stroke-width="0.55"/></g>
<g transform="translate(31.2,316.125) scale(1.08)"><path d="M-2.9,-0.7 L-0.6,0.3 L3.1,-1.5 L3.1,1.3 L-0.2,2.6 L-2.9,1.3Z" fill="#4a94bd"/><path d="M-5.2,-1.7 L0.1,-4.5 L5.1,-2.7 L-0.6,0.1Z" fill="#236f9c"/><path d="M-2.9,-1.5 L-4.2,2.8" stroke="#222" stroke-width="0.8"/></g>
<path d="M4.9,288.87499999999994 L7.5,291.17499999999995 L4.9,293.47499999999997Z" fill="#555"/>
<g transform="translate(19.6,290.57499999999993) scale(0.9)"><path d="M-3.6,-2.6 L-1.4,-4.4 L1.6,-3.4 L2.2,-1.2 L4.8,-0.2 L4.8,2.6 L1.4,4.6 L-4.4,2.2 L-4.6,-0.4Z" fill="#f4cc22" stroke="#94750f" stroke-width="0.8" stroke-linejoin="round"/><path d="M-4.4,-0.2 L-1,1 L1.4,0 L4.6,1 M-1,1 L-1,2.6 L1.4,3.4 L1.4,4.4" fill="none" stroke="#94750f" stroke-width="0.6"/><ellipse cx="-0.8" cy="-2.4" rx="1.2" ry="0.8" fill="none" stroke="#94750f" stroke-width="0.55"/></g>
<rect x="13.2" y="286.97499999999997" width="3.6" height="8.6" rx="1" fill="#222"/><circle cx="15" cy="289.17499999999995" r="1.1" fill="#e03020"/><circle cx="15" cy="293.17499999999995" r="1.1" fill="#27b13a"/>
<path d="M3.6000000000000005,377.5 L8.2,377.5 L5.9,380.2Z" fill="#444"/>
<path d="M14,374.9 H18 L19,376.1 H24 V382.5 H14Z" fill="#5a9bd4" stroke="#2f6fa8" stroke-width="0.8"/>
<g transform="translate(31.3,378.5) scale(1.08)"><path d="M-2.9,-0.7 L-0.6,0.3 L3.1,-1.5 L3.1,1.3 L-0.2,2.6 L-2.9,1.3Z" fill="#4a94bd"/><path d="M-5.2,-1.7 L0.1,-4.5 L5.1,-2.7 L-0.6,0.1Z" fill="#236f9c"/><path d="M-2.9,-1.5 L-4.2,2.8" stroke="#222" stroke-width="0.8"/></g>
<path d="M17,388.67499999999995 L19.6,390.97499999999997 L17,393.275Z" fill="#555"/>
<g transform="translate(31,390.37499999999994) scale(1.0)"><path d="M-3.6,-2.6 L-1.4,-4.4 L1.6,-3.4 L2.2,-1.2 L4.8,-0.2 L4.8,2.6 L1.4,4.6 L-4.4,2.2 L-4.6,-0.4Z" fill="#f4cc22" stroke="#94750f" stroke-width="0.8" stroke-linejoin="round"/><path d="M-4.4,-0.2 L-1,1 L1.4,0 L4.6,1 M-1,1 L-1,2.6 L1.4,3.4 L1.4,4.4" fill="none" stroke="#94750f" stroke-width="0.6"/><ellipse cx="-0.8" cy="-2.4" rx="1.2" ry="0.8" fill="none" stroke="#94750f" stroke-width="0.55"/></g>
<g transform="translate(43.3,390.97499999999997) scale(1.08)"><path d="M-2.9,-0.7 L-0.6,0.3 L3.1,-1.5 L3.1,1.3 L-0.2,2.6 L-2.9,1.3Z" fill="#4a94bd"/><path d="M-5.2,-1.7 L0.1,-4.5 L5.1,-2.7 L-0.6,0.1Z" fill="#236f9c"/><path d="M-2.9,-1.5 L-4.2,2.8" stroke="#222" stroke-width="0.8"/></g>
<path d="M17,401.15 L19.6,403.45 L17,405.75Z" fill="#555"/>
<g transform="translate(31,402.84999999999997) scale(1.0)"><path d="M-3.6,-2.6 L-1.4,-4.4 L1.6,-3.4 L2.2,-1.2 L4.8,-0.2 L4.8,2.6 L1.4,4.6 L-4.4,2.2 L-4.6,-0.4Z" fill="#f4cc22" stroke="#94750f" stroke-width="0.8" stroke-linejoin="round"/><path d="M-4.4,-0.2 L-1,1 L1.4,0 L4.6,1 M-1,1 L-1,2.6 L1.4,3.4 L1.4,4.4" fill="none" stroke="#94750f" stroke-width="0.6"/><ellipse cx="-0.8" cy="-2.4" rx="1.2" ry="0.8" fill="none" stroke="#94750f" stroke-width="0.55"/></g>
<g transform="translate(43.3,403.45) scale(1.08)"><path d="M-2.9,-0.7 L-0.6,0.3 L3.1,-1.5 L3.1,1.3 L-0.2,2.6 L-2.9,1.3Z" fill="#4a94bd"/><path d="M-5.2,-1.7 L0.1,-4.5 L5.1,-2.7 L-0.6,0.1Z" fill="#236f9c"/><path d="M-2.9,-1.5 L-4.2,2.8" stroke="#222" stroke-width="0.8"/></g>
<path d="M17,413.625 L19.6,415.925 L17,418.225Z" fill="#555"/>
<g transform="translate(31,415.325) scale(1.0)"><path d="M-3.6,-2.6 L-1.4,-4.4 L1.6,-3.4 L2.2,-1.2 L4.8,-0.2 L4.8,2.6 L1.4,4.6 L-4.4,2.2 L-4.6,-0.4Z" fill="#f4cc22" stroke="#94750f" stroke-width="0.8" stroke-linejoin="round"/><path d="M-4.4,-0.2 L-1,1 L1.4,0 L4.6,1 M-1,1 L-1,2.6 L1.4,3.4 L1.4,4.4" fill="none" stroke="#94750f" stroke-width="0.6"/><ellipse cx="-0.8" cy="-2.4" rx="1.2" ry="0.8" fill="none" stroke="#94750f" stroke-width="0.55"/></g>
<g transform="translate(43.3,415.925) scale(1.08)"><path d="M-2.9,-0.7 L-0.6,0.3 L3.1,-1.5 L3.1,1.3 L-0.2,2.6 L-2.9,1.3Z" fill="#4a94bd"/><path d="M-5.2,-1.7 L0.1,-4.5 L5.1,-2.7 L-0.6,0.1Z" fill="#236f9c"/><path d="M-2.9,-1.5 L-4.2,2.8" stroke="#222" stroke-width="0.8"/></g>
<path d="M17,426.09999999999997 L19.6,428.4 L17,430.7Z" fill="#555"/>
<g transform="translate(31,427.79999999999995) scale(1.0)"><path d="M-3.6,-2.6 L-1.4,-4.4 L1.6,-3.4 L2.2,-1.2 L4.8,-0.2 L4.8,2.6 L1.4,4.6 L-4.4,2.2 L-4.6,-0.4Z" fill="#f4cc22" stroke="#94750f" stroke-width="0.8" stroke-linejoin="round"/><path d="M-4.4,-0.2 L-1,1 L1.4,0 L4.6,1 M-1,1 L-1,2.6 L1.4,3.4 L1.4,4.4" fill="none" stroke="#94750f" stroke-width="0.6"/><ellipse cx="-0.8" cy="-2.4" rx="1.2" ry="0.8" fill="none" stroke="#94750f" stroke-width="0.55"/></g>
<g transform="translate(43.3,428.4) scale(1.08)"><path d="M-2.9,-0.7 L-0.6,0.3 L3.1,-1.5 L3.1,1.3 L-0.2,2.6 L-2.9,1.3Z" fill="#4a94bd"/><path d="M-5.2,-1.7 L0.1,-4.5 L5.1,-2.7 L-0.6,0.1Z" fill="#236f9c"/><path d="M-2.9,-1.5 L-4.2,2.8" stroke="#222" stroke-width="0.8"/></g>
<path d="M17,438.575 L19.6,440.875 L17,443.175Z" fill="#555"/>
<g transform="translate(31,440.275) scale(1.0)"><path d="M-3.6,-2.6 L-1.4,-4.4 L1.6,-3.4 L2.2,-1.2 L4.8,-0.2 L4.8,2.6 L1.4,4.6 L-4.4,2.2 L-4.6,-0.4Z" fill="#f4cc22" stroke="#94750f" stroke-width="0.8" stroke-linejoin="round"/><path d="M-4.4,-0.2 L-1,1 L1.4,0 L4.6,1 M-1,1 L-1,2.6 L1.4,3.4 L1.4,4.4" fill="none" stroke="#94750f" stroke-width="0.6"/><ellipse cx="-0.8" cy="-2.4" rx="1.2" ry="0.8" fill="none" stroke="#94750f" stroke-width="0.55"/></g>
<g transform="translate(43.3,440.875) scale(1.08)"><path d="M-2.9,-0.7 L-0.6,0.3 L3.1,-1.5 L3.1,1.3 L-0.2,2.6 L-2.9,1.3Z" fill="#4a94bd"/><path d="M-5.2,-1.7 L0.1,-4.5 L5.1,-2.7 L-0.6,0.1Z" fill="#236f9c"/><path d="M-2.9,-1.5 L-4.2,2.8" stroke="#222" stroke-width="0.8"/></g>
<path d="M4.9,451.04999999999995 L7.5,453.34999999999997 L4.9,455.65Z" fill="#555"/>
<path d="M14,449.74999999999994 H18 L19,450.95 H24 V457.34999999999997 H14Z" fill="#fff" stroke="#333" stroke-width="0.8"/>
<g transform="translate(31.3,453.34999999999997) scale(1.08)"><path d="M-2.9,-0.7 L-0.6,0.3 L3.1,-1.5 L3.1,1.3 L-0.2,2.6 L-2.9,1.3Z" fill="#4a94bd"/><path d="M-5.2,-1.7 L0.1,-4.5 L5.1,-2.7 L-0.6,0.1Z" fill="#236f9c"/><path d="M-2.9,-1.5 L-4.2,2.8" stroke="#222" stroke-width="0.8"/></g>
<path d="M4.9,476.0 L7.5,478.3 L4.9,480.6Z" fill="#555"/>
<rect x="14.6" y="474.1" width="3.4" height="8.6" rx="1.7" fill="#b9daf0" stroke="#6aa6d0" stroke-width="0.8"/><rect x="19.6" y="474.1" width="3.4" height="8.6" rx="1.7" fill="#b9daf0" stroke="#6aa6d0" stroke-width="0.8"/>
<path d="M3.6000000000000005,489.775 L8.2,489.775 L5.9,492.47499999999997Z" fill="#444"/>
<g fill="none" stroke="#444" stroke-width="0.9"><circle cx="16.3" cy="492.575" r="2"/><circle cx="21.8" cy="488.97499999999997" r="2"/><path d="M14.6,491.375 L20.4,487.375 M18,493.775 L23.5,490.17499999999995"/></g>
<path d="M27,499.25 H34.5 V506.75 H28.5 Q27,506.75 27,505.25Z" fill="#fff" stroke="#666" stroke-width="0.8"/>
<path d="M15.6,513.1249999999999 L22.6,510.9249999999999 V518.925 L15.6,520.925Z" fill="#4a8fd0" stroke="#1f5f99" stroke-width="0.8"/><path d="M17.6,513.3249999999999 V519.3249999999999" stroke="#9cc6ee" stroke-width="0.8"/>
</svg>
<span class="t" style="top:351.08px;font-size:7.2px;line-height:8.64px;color:#444;letter-spacing:0.284px;left:657.30px;">Cut-Extrude3 of axe AD&lt;1&gt;</span>
</body></html>
